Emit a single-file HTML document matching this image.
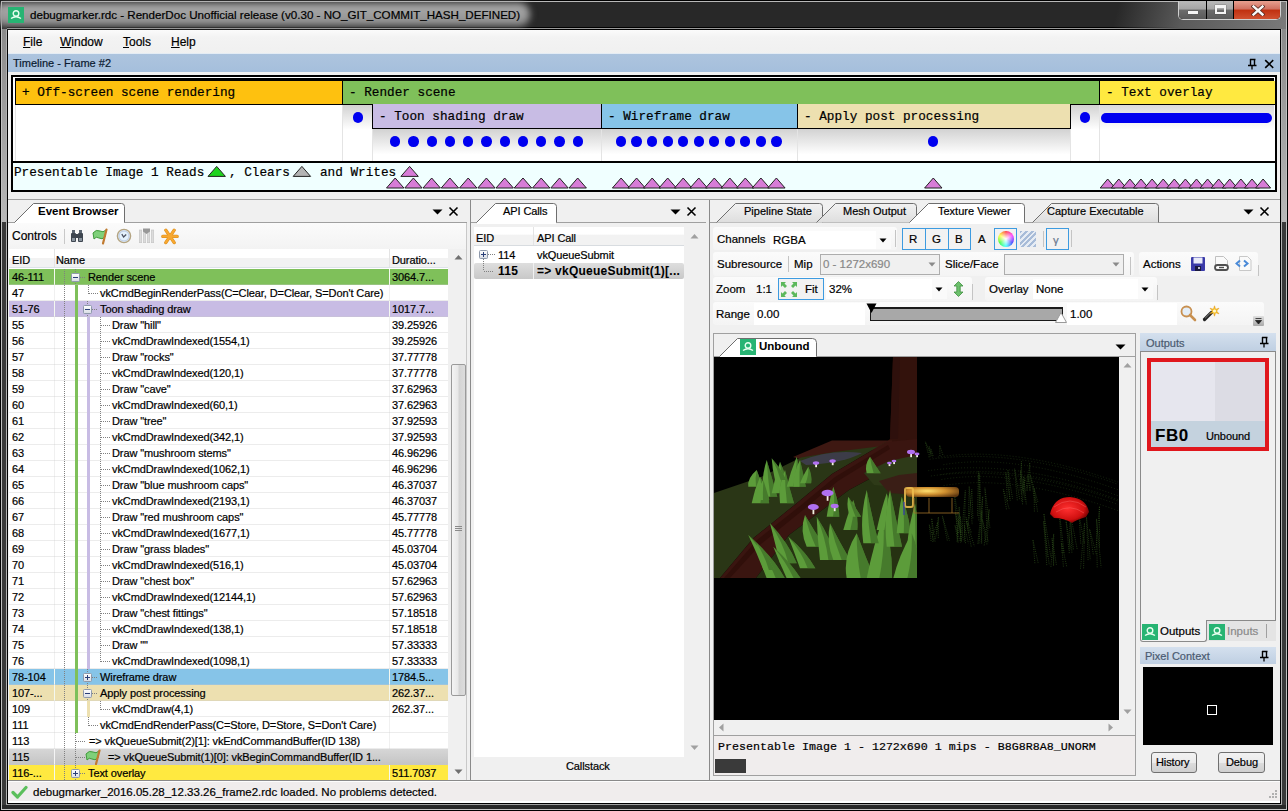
<!DOCTYPE html>
<html><head><meta charset="utf-8">
<style>
*{margin:0;padding:0;box-sizing:border-box}
html,body{width:1288px;height:811px;overflow:hidden;background:#282828;font-family:"Liberation Sans",sans-serif;font-size:11px;color:#000}
.a{position:absolute}
.t{position:absolute;white-space:pre;line-height:1;-webkit-text-stroke:0.2px currentColor}
.mono{font-family:"Liberation Mono",monospace}
.t[style*="bold"]{-webkit-text-stroke:0.05px currentColor}
</style></head><body>
<!-- window frame -->
<div class="a" style="left:0;top:0;width:1288px;height:811px;background:#282828"></div>
<div class="a" style="left:0;top:0;width:1288px;height:1px;background:#000"></div>
<div class="a" style="left:1px;top:1px;width:1286px;height:1px;background:#b8b8b8"></div>
<div class="a" style="left:0;top:0;width:1px;height:811px;background:#000"></div>
<div class="a" style="left:1px;top:1px;width:1px;height:809px;background:#c0c0c0"></div>
<div class="a" style="left:2px;top:29px;width:4px;height:193px;background:linear-gradient(#8a8a8a,#b8b8b8)"></div>
<div class="a" style="left:2px;top:222px;width:4px;height:583px;background:#3a3a3a"></div>
<div class="a" style="left:6px;top:29px;width:1px;height:776px;background:#b0b0b0"></div>
<div class="a" style="left:7px;top:29px;width:1px;height:775px;background:#000"></div>
<div class="a" style="left:1287px;top:0;width:1px;height:811px;background:#000"></div>
<div class="a" style="left:1286px;top:1px;width:1px;height:809px;background:#c0c0c0"></div>
<div class="a" style="left:1282px;top:29px;width:4px;height:193px;background:linear-gradient(#8a8a8a,#b8b8b8)"></div>
<div class="a" style="left:1282px;top:222px;width:4px;height:583px;background:#3a3a3a"></div>
<div class="a" style="left:1281px;top:29px;width:1px;height:776px;background:#b0b0b0"></div>
<div class="a" style="left:1280px;top:29px;width:1px;height:775px;background:#000"></div>
<div class="a" style="left:0;top:810px;width:1288px;height:1px;background:#000"></div>
<div class="a" style="left:1px;top:809px;width:1286px;height:1px;background:#c8c8c8"></div>
<div class="a" style="left:7px;top:803px;width:1274px;height:1px;background:#000"></div>
<div class="a" style="left:6px;top:804px;width:1276px;height:1px;background:#a0a0a0"></div>
<!-- title -->
<div class="a" style="left:7px;top:27px;width:1274px;height:1px;background:#000"></div>
<div class="a" style="left:7px;top:28px;width:1274px;height:1px;background:#9a9a9a"></div>
<div class="a" style="left:7px;top:29px;width:1274px;height:1px;background:#000"></div>
<div class="a" style="left:-6px;top:3px;width:536px;height:23px;border-radius:11px;background:linear-gradient(#acacac,#8e8e8e);filter:blur(3.5px)"></div>
<div class="a" style="left:8px;top:7px;width:16px;height:16px;background:#27b473"></div>
<svg class="a" style="left:8px;top:7px" width="16" height="16"><circle cx="8" cy="6.5" r="2.8" fill="none" stroke="#e8fff0" stroke-width="1.4"/><path d="M3 11.5 Q8 8 13 11.5" fill="none" stroke="#e8fff0" stroke-width="1.4"/></svg>
<div class="t" style="left:30px;top:9px;font-size:11.6px;color:#000">debugmarker.rdc - RenderDoc Unofficial release (v0.30 - NO_GIT_COMMIT_HASH_DEFINED)</div>
<div class="a" style="left:1100px;top:2px;width:186px;height:27px;background:linear-gradient(105deg,rgba(40,40,40,0) 10%,#5a5a5a 45%,#7a7a7a 100%)"></div>
<!-- caption buttons -->
<div class="a" style="left:1178px;top:1px;width:103px;height:19px;border:1px solid #d0d0d0;border-top:none;border-radius:0 0 5px 5px;background:#000"></div>
<div class="a" style="left:1179px;top:1px;width:27px;height:18px;background:linear-gradient(#b9b9b9,#a5a5a5 45%,#6c6c6c 50%,#5a5a5a);border-radius:0 0 0 4px"></div>
<div class="a" style="left:1207px;top:1px;width:26px;height:18px;background:linear-gradient(#b9b9b9,#a5a5a5 45%,#6c6c6c 50%,#5a5a5a)"></div>
<div class="a" style="left:1234px;top:1px;width:46px;height:18px;background:linear-gradient(#e8a090,#d07060 45%,#c03010 50%,#d05030);border-radius:0 0 4px 0"></div>
<div class="a" style="left:1188px;top:11px;width:10px;height:3px;background:#f4f4f4;box-shadow:0 0 1px #333"></div>
<div class="a" style="left:1215px;top:5px;width:11px;height:9px;border:2px solid #f4f4f4;border-top-width:3px;box-shadow:0 0 1px #333"></div>
<svg class="a" style="left:1251px;top:5px" width="14" height="11"><path d="M2.5 1.5L11.5 9.5M11.5 1.5L2.5 9.5" stroke="#5a2a20" stroke-width="4" stroke-linecap="square"/><path d="M2.5 1.5L11.5 9.5M11.5 1.5L2.5 9.5" stroke="#f8f8f8" stroke-width="2.4" stroke-linecap="square"/></svg>
<!-- client area -->
<div class="a" id="client" style="left:8px;top:30px;width:1272px;height:773px;background:#f0f0f0"></div>

<!-- menu -->
<div class="a" style="left:8px;top:30px;width:1272px;height:24px;background:linear-gradient(#fbfbfb,#f3f3f3 30%,#f0f0f0)"></div>
<div class="a" style="left:8px;top:53px;width:1272px;height:1px;background:#e4ecf4"></div>
<div class="t" style="left:23px;top:36px;font-size:12px"><u>F</u>ile</div>
<div class="t" style="left:60px;top:36px;font-size:12px"><u>W</u>indow</div>
<div class="t" style="left:123px;top:36px;font-size:12px"><u>T</u>ools</div>
<div class="t" style="left:171px;top:36px;font-size:12px"><u>H</u>elp</div>
<!-- timeline title -->
<div class="a" style="left:8px;top:54px;width:1272px;height:18px;background:linear-gradient(#adc4de,#a5bfdc)"></div>
<div class="t" style="left:13px;top:58px;font-size:11px;color:#0a1a30">Timeline - Frame #2</div>
<svg class="a" style="left:1247px;top:58px" width="12" height="12"><path d="M3 1.5h5.5M3.5 1v6M7.5 1v6" stroke="#000" stroke-width="1.4" fill="none"/><path d="M1 7.5h8.5M5 7.5v4" stroke="#000" stroke-width="1.3" fill="none"/></svg>
<svg class="a" style="left:1263px;top:58px" width="12" height="12"><path d="M2.2 2.2L10.2 9.8M10.2 2.2L2.2 9.8" stroke="#000" stroke-width="1.6"/></svg>
<!-- timeline -->
<div class="a" style="left:8px;top:72px;width:1272px;height:127px;background:#f0f0f0"></div>
<div class="a" style="left:11px;top:75px;width:1266px;height:117px;background:#000"></div>
<div class="a" style="left:13px;top:77px;width:1262px;height:84px;background:#fff"></div>
<div class="a" style="left:13px;top:163px;width:1262px;height:27px;background:#f0ffff"></div>
<div class="a" style="left:15px;top:78px;width:1259px;height:3px;background:#000"></div>
<div class="a" style="left:342px;top:104px;width:757px;height:57px;background:linear-gradient(#d0d0d0,#fff 45%)"></div>
<div class="a" style="left:1099px;top:104px;width:175px;height:57px;background:linear-gradient(#d8d8d8,#fff 45%)"></div>
<div class="a" style="left:372px;top:128px;width:698px;height:33px;background:linear-gradient(#d0d0d0,#fff 80%)"></div>
<div class="a" style="left:15px;top:104px;width:1px;height:57px;background:#e4e4e4"></div>
<div class="a" style="left:342px;top:104px;width:1px;height:57px;background:#e4e4e4"></div>
<div class="a" style="left:372px;top:104px;width:1px;height:57px;background:#e4e4e4"></div>
<div class="a" style="left:601px;top:104px;width:1px;height:57px;background:#e4e4e4"></div>
<div class="a" style="left:797px;top:104px;width:1px;height:57px;background:#e4e4e4"></div>
<div class="a" style="left:1070px;top:104px;width:1px;height:57px;background:#e4e4e4"></div>
<div class="a" style="left:1099px;top:104px;width:1px;height:57px;background:#e4e4e4"></div>
<div class="a" style="left:15px;top:81px;width:328px;height:24px;background:#fec10f;border-left:1px solid #000;border-bottom:1px solid #000;"></div>
<div class="t mono" style="left:22px;top:87px;font-size:12.7px;color:#000">+ Off-screen scene rendering</div>
<div class="a" style="left:342px;top:81px;width:758px;height:24px;background:#7fc05a;border-left:1px solid #000;border-bottom:1px solid #000;"></div>
<div class="t mono" style="left:349px;top:87px;font-size:12.7px;color:#000">- Render scene</div>
<div class="a" style="left:1099px;top:81px;width:176px;height:24px;background:#ffe940;border-left:1px solid #000;border-bottom:1px solid #000;"></div>
<div class="t mono" style="left:1106px;top:87px;font-size:12.7px;color:#000">- Text overlay</div>
<div class="a" style="left:372px;top:104px;width:230px;height:25px;background:#c8bce4;border-left:1px solid #000;border-bottom:1px solid #000;"></div>
<div class="t mono" style="left:379px;top:111px;font-size:12.7px;color:#000">- Toon shading draw</div>
<div class="a" style="left:601px;top:104px;width:197px;height:25px;background:#86c4e8;border-left:1px solid #000;border-bottom:1px solid #000;"></div>
<div class="t mono" style="left:608px;top:111px;font-size:12.7px;color:#000">- Wireframe draw</div>
<div class="a" style="left:797px;top:104px;width:274px;height:25px;background:#ede0b0;border-left:1px solid #000;border-bottom:1px solid #000;border-right:1px solid #000;"></div>
<div class="t mono" style="left:804px;top:111px;font-size:12.7px;color:#000">- Apply post processing</div>
<div class="a" style="left:352.5px;top:112.4px;width:10.4px;height:10.4px;border-radius:50%;background:#0000f0"></div>
<div class="a" style="left:1079.8px;top:112.3px;width:10.4px;height:10.4px;border-radius:50%;background:#0000f0"></div>
<div class="a" style="left:1101px;top:112.5px;width:171px;height:10px;border-radius:5px;background:#0000f0"></div>
<div class="a" style="left:390.0px;top:136.4px;width:10.4px;height:10.4px;border-radius:50%;background:#0000f0"></div>
<div class="a" style="left:408.2px;top:136.4px;width:10.4px;height:10.4px;border-radius:50%;background:#0000f0"></div>
<div class="a" style="left:426.5px;top:136.4px;width:10.4px;height:10.4px;border-radius:50%;background:#0000f0"></div>
<div class="a" style="left:444.8px;top:136.4px;width:10.4px;height:10.4px;border-radius:50%;background:#0000f0"></div>
<div class="a" style="left:463.0px;top:136.4px;width:10.4px;height:10.4px;border-radius:50%;background:#0000f0"></div>
<div class="a" style="left:481.2px;top:136.4px;width:10.4px;height:10.4px;border-radius:50%;background:#0000f0"></div>
<div class="a" style="left:499.5px;top:136.4px;width:10.4px;height:10.4px;border-radius:50%;background:#0000f0"></div>
<div class="a" style="left:517.8px;top:136.4px;width:10.4px;height:10.4px;border-radius:50%;background:#0000f0"></div>
<div class="a" style="left:536.0px;top:136.4px;width:10.4px;height:10.4px;border-radius:50%;background:#0000f0"></div>
<div class="a" style="left:554.2px;top:136.4px;width:10.4px;height:10.4px;border-radius:50%;background:#0000f0"></div>
<div class="a" style="left:572.5px;top:136.4px;width:10.4px;height:10.4px;border-radius:50%;background:#0000f0"></div>
<div class="a" style="left:615.9px;top:136.4px;width:10.4px;height:10.4px;border-radius:50%;background:#0000f0"></div>
<div class="a" style="left:631.4px;top:136.4px;width:10.4px;height:10.4px;border-radius:50%;background:#0000f0"></div>
<div class="a" style="left:647.0px;top:136.4px;width:10.4px;height:10.4px;border-radius:50%;background:#0000f0"></div>
<div class="a" style="left:662.5px;top:136.4px;width:10.4px;height:10.4px;border-radius:50%;background:#0000f0"></div>
<div class="a" style="left:678.0px;top:136.4px;width:10.4px;height:10.4px;border-radius:50%;background:#0000f0"></div>
<div class="a" style="left:693.5px;top:136.4px;width:10.4px;height:10.4px;border-radius:50%;background:#0000f0"></div>
<div class="a" style="left:709.1px;top:136.4px;width:10.4px;height:10.4px;border-radius:50%;background:#0000f0"></div>
<div class="a" style="left:724.6px;top:136.4px;width:10.4px;height:10.4px;border-radius:50%;background:#0000f0"></div>
<div class="a" style="left:740.1px;top:136.4px;width:10.4px;height:10.4px;border-radius:50%;background:#0000f0"></div>
<div class="a" style="left:755.7px;top:136.4px;width:10.4px;height:10.4px;border-radius:50%;background:#0000f0"></div>
<div class="a" style="left:771.2px;top:136.4px;width:10.4px;height:10.4px;border-radius:50%;background:#0000f0"></div>
<div class="a" style="left:928.1px;top:136.4px;width:10.4px;height:10.4px;border-radius:50%;background:#0000f0"></div>
<div class="t mono" style="left:14px;top:167px;font-size:12.7px;color:#000">Presentable Image 1 Reads</div><div class="t mono" style="left:229px;top:167px;font-size:12.7px;color:#000">, Clears</div><div class="t mono" style="left:320px;top:167px;font-size:12.7px;color:#000">and Writes</div>
<svg class="a" style="left:0;top:0" width="1288" height="200"><polygon points="208.0,176.4 216.7,166.4 225.4,176.4" fill="#1ed41e" stroke="#222" stroke-width="1"/><polygon points="293.2,176.4 301.9,166.4 310.6,176.4" fill="#b4b4b4" stroke="#222" stroke-width="1"/><polygon points="400.9,176.4 409.6,166.4 418.3,176.4" fill="#d77cd7" stroke="#222" stroke-width="1"/><polygon points="386.5,188 395.2,178 403.9,188" fill="#d77cd7" stroke="#222" stroke-width="1"/><polygon points="404.8,188 413.4,178 422.1,188" fill="#d77cd7" stroke="#222" stroke-width="1"/><polygon points="423.0,188 431.7,178 440.4,188" fill="#d77cd7" stroke="#222" stroke-width="1"/><polygon points="441.2,188 449.9,178 458.6,188" fill="#d77cd7" stroke="#222" stroke-width="1"/><polygon points="459.5,188 468.2,178 476.9,188" fill="#d77cd7" stroke="#222" stroke-width="1"/><polygon points="477.8,188 486.4,178 495.1,188" fill="#d77cd7" stroke="#222" stroke-width="1"/><polygon points="496.0,188 504.7,178 513.4,188" fill="#d77cd7" stroke="#222" stroke-width="1"/><polygon points="514.2,188 523.0,178 531.7,188" fill="#d77cd7" stroke="#222" stroke-width="1"/><polygon points="532.5,188 541.2,178 549.9,188" fill="#d77cd7" stroke="#222" stroke-width="1"/><polygon points="550.8,188 559.5,178 568.2,188" fill="#d77cd7" stroke="#222" stroke-width="1"/><polygon points="569.0,188 577.7,178 586.4,188" fill="#d77cd7" stroke="#222" stroke-width="1"/><polygon points="612.4,188 621.1,178 629.8,188" fill="#d77cd7" stroke="#222" stroke-width="1"/><polygon points="627.9,188 636.6,178 645.3,188" fill="#d77cd7" stroke="#222" stroke-width="1"/><polygon points="643.5,188 652.2,178 660.9,188" fill="#d77cd7" stroke="#222" stroke-width="1"/><polygon points="659.0,188 667.7,178 676.4,188" fill="#d77cd7" stroke="#222" stroke-width="1"/><polygon points="674.5,188 683.2,178 691.9,188" fill="#d77cd7" stroke="#222" stroke-width="1"/><polygon points="690.0,188 698.8,178 707.5,188" fill="#d77cd7" stroke="#222" stroke-width="1"/><polygon points="705.6,188 714.3,178 723.0,188" fill="#d77cd7" stroke="#222" stroke-width="1"/><polygon points="721.1,188 729.8,178 738.5,188" fill="#d77cd7" stroke="#222" stroke-width="1"/><polygon points="736.6,188 745.3,178 754.0,188" fill="#d77cd7" stroke="#222" stroke-width="1"/><polygon points="752.2,188 760.9,178 769.6,188" fill="#d77cd7" stroke="#222" stroke-width="1"/><polygon points="767.7,188 776.4,178 785.1,188" fill="#d77cd7" stroke="#222" stroke-width="1"/><polygon points="924.6,188 933.3,178 942.0,188" fill="#d77cd7" stroke="#222" stroke-width="1"/><polygon points="1100.2,188 1107.7,179 1115.2,188" fill="#d77cd7" stroke="#222" stroke-width="1"/><polygon points="1111.3,188 1118.8,179 1126.3,188" fill="#d77cd7" stroke="#222" stroke-width="1"/><polygon points="1122.4,188 1129.9,179 1137.4,188" fill="#d77cd7" stroke="#222" stroke-width="1"/><polygon points="1133.5,188 1141.0,179 1148.5,188" fill="#d77cd7" stroke="#222" stroke-width="1"/><polygon points="1144.6,188 1152.1,179 1159.6,188" fill="#d77cd7" stroke="#222" stroke-width="1"/><polygon points="1155.7,188 1163.2,179 1170.7,188" fill="#d77cd7" stroke="#222" stroke-width="1"/><polygon points="1166.8,188 1174.3,179 1181.8,188" fill="#d77cd7" stroke="#222" stroke-width="1"/><polygon points="1177.9,188 1185.4,179 1192.9,188" fill="#d77cd7" stroke="#222" stroke-width="1"/><polygon points="1189.0,188 1196.5,179 1204.0,188" fill="#d77cd7" stroke="#222" stroke-width="1"/><polygon points="1200.1,188 1207.6,179 1215.1,188" fill="#d77cd7" stroke="#222" stroke-width="1"/><polygon points="1211.2,188 1218.7,179 1226.2,188" fill="#d77cd7" stroke="#222" stroke-width="1"/><polygon points="1222.3,188 1229.8,179 1237.3,188" fill="#d77cd7" stroke="#222" stroke-width="1"/><polygon points="1233.4,188 1240.9,179 1248.4,188" fill="#d77cd7" stroke="#222" stroke-width="1"/><polygon points="1244.5,188 1252.0,179 1259.5,188" fill="#d77cd7" stroke="#222" stroke-width="1"/><polygon points="1255.6,188 1263.1,179 1270.6,188" fill="#d77cd7" stroke="#222" stroke-width="1"/></svg>
<!-- EB START -->
<div class="a" style="left:8px;top:199px;width:462px;height:1px;background:#a0a0a0"></div>
<div class="a" style="left:8px;top:222px;width:459px;height:1px;background:#a0a0a0"></div>
<svg class="a" style="left:8px;top:199px" width="130" height="25"><path d="M6.5 23.5 L25.5 4.5 H113.5 Q116.5 4.5 116.5 7.5 V23.5" fill="#fff" stroke="#6e6e6e" stroke-width="1"/><rect x="7" y="23" width="109" height="2" fill="#fff"/></svg>
<div class="t" style="left:38px;top:206px;font-size:11.5px;font-weight:bold">Event Browser</div>
<svg class="a" style="left:432px;top:208px" width="12" height="8"><path d="M0.5 1.5H10.5L5.5 6.5Z" fill="#000"/></svg>
<svg class="a" style="left:448px;top:206px" width="12" height="12"><path d="M1.5 1.5L9.5 9.5M9.5 1.5L1.5 9.5" stroke="#000" stroke-width="1.6"/></svg>
<div class="a" style="left:9px;top:223px;width:458px;height:26px;background:linear-gradient(#fbfbfb,#f3f3f3)"></div>
<div class="t" style="left:12px;top:230px;font-size:12px">Controls</div>
<div class="a" style="left:64px;top:229px;width:1px;height:15px;background:#c8c8c8"></div>
<svg class="a" style="left:70px;top:229px" width="16" height="14">
<rect x="2" y="1" width="3" height="4" fill="#5a6470"/><rect x="9" y="1" width="3" height="4" fill="#5a6470"/>
<rect x="1" y="4" width="5" height="9" rx="1" fill="#3e4650"/><rect x="8" y="4" width="5" height="9" rx="1" fill="#3e4650"/>
<rect x="5" y="5" width="4" height="4" fill="#3e4650"/><rect x="2" y="9" width="3" height="3" fill="#8a949e"/><rect x="9" y="9" width="3" height="3" fill="#8a949e"/></svg>
<svg class="a" style="left:92px;top:228px" width="17" height="17">
<path d="M1 5 Q4 1 8 3 Q11 5 14 2 L13 9 Q10 12 7 10 Q4 8 2 11 Z" fill="#7fd07a" stroke="#3f9a3a" stroke-width="1"/>
<path d="M14.5 1.5 L11 15.5" stroke="#c07a30" stroke-width="2.2" stroke-linecap="round"/></svg>
<svg class="a" style="left:116px;top:228px" width="16" height="16">
<circle cx="8" cy="8" r="6.6" fill="#e4f2fc" stroke="#b4a482" stroke-width="1.4"/><circle cx="8" cy="8" r="5" fill="none" stroke="#a8b8d8" stroke-width="0.7"/><path d="M5.8 6.2 L7.6 9 L10.2 6.6" stroke="#4a5060" stroke-width="1.3" fill="none"/></svg>
<svg class="a" style="left:138px;top:228px" width="17" height="16">
<g fill="#dcdcdc" stroke="#c4c4c4" stroke-width="0.6"><rect x="1.3" y="2" width="2.4" height="12.7"/><rect x="5.3" y="2" width="2.4" height="12.7"/><rect x="9.3" y="2" width="2.4" height="12.7"/><rect x="13.3" y="2" width="2.4" height="12.7"/></g>
<path d="M5 0.5H12V3.5L8.5 6L5 3.5Z" fill="#989898"/></svg>
<svg class="a" style="left:161px;top:228px" width="18" height="17">
<g stroke="#d88a18" stroke-width="3.2" stroke-linecap="round"><path d="M1.8 8.4H16.2M4.8 2.2L13.2 14.6M13.2 2.2L4.8 14.6"/></g>
<g stroke="#f8a830" stroke-width="2.2" stroke-linecap="round"><path d="M1.8 8.4H16.2M4.8 2.2L13.2 14.6M13.2 2.2L4.8 14.6"/></g></svg>
<div class="a" style="left:9px;top:249px;width:439px;height:532px;background:#fff"></div>
<div class="a" style="left:9px;top:249px;width:439px;height:19px;background:linear-gradient(#ffffff 0%,#ffffff 45%,#f2f2f2 50%,#f2f2f2 100%)"></div>
<div class="a" style="left:9px;top:267px;width:439px;height:1px;background:#dde2e8"></div>
<div class="a" style="left:54px;top:249px;width:1px;height:18px;background:#e4e4e4"></div>
<div class="a" style="left:389px;top:249px;width:1px;height:18px;background:#e4e4e4"></div>
<div class="t" style="left:12px;top:255px;font-size:11px;letter-spacing:-0.1px">EID</div>
<div class="t" style="left:56px;top:255px;font-size:11px;letter-spacing:-0.1px">Name</div>
<div class="t" style="left:392px;top:255px;font-size:11px;letter-spacing:-0.1px">Duratio...</div>
<div class="a" style="left:9px;top:269px;width:439px;height:16px;background:#7fc05a"></div>
<div class="a" style="left:54px;top:269px;width:1px;height:16px;background:#f4f8f0"></div>
<div class="a" style="left:389px;top:269px;width:1px;height:16px;background:#f4f8f0"></div>
<div class="a" style="left:9px;top:284px;width:439px;height:1px;background:rgba(200,200,200,0.35)"></div>
<div class="t" style="left:12px;top:272px;font-size:11px;letter-spacing:-0.1px">46-111</div>
<div class="a" style="left:64px;top:269px;width:1px;height:16px;background:repeating-linear-gradient(#808080 0 1px,transparent 1px 2px)"></div>
<div class="a" style="left:75px;top:269px;width:1px;height:16px;background:repeating-linear-gradient(#808080 0 1px,transparent 1px 2px)"></div>
<svg class="a" style="left:71px;top:273px" width="9" height="9"><defs><linearGradient id="bg71273" x1="0" y1="0" x2="0" y2="1"><stop offset="0" stop-color="#fff"/><stop offset="1" stop-color="#d8dce4"/></linearGradient></defs><rect x="0.5" y="0.5" width="8" height="8" rx="1" fill="url(#bg71273)" stroke="#8e99ab"/><path d="M2 4.5H7" stroke="#2a3f78" stroke-width="1"/></svg>
<div class="a" style="left:80px;top:277px;width:6px;height:1px;background:repeating-linear-gradient(90deg,#808080 0 1px,transparent 1px 2px)"></div>
<div class="t" style="left:88px;top:272px;font-size:11px;letter-spacing:-0.1px">Render scene</div>
<div class="t" style="left:392px;top:272px;font-size:11px;letter-spacing:-0.1px">3064.7...</div>
<div class="a" style="left:54px;top:285px;width:1px;height:16px;background:#f0f0f0"></div>
<div class="a" style="left:389px;top:285px;width:1px;height:16px;background:#f0f0f0"></div>
<div class="a" style="left:9px;top:300px;width:439px;height:1px;background:rgba(200,200,200,0.35)"></div>
<div class="t" style="left:12px;top:288px;font-size:11px;letter-spacing:-0.1px">47</div>
<div class="a" style="left:64px;top:285px;width:1px;height:16px;background:repeating-linear-gradient(#808080 0 1px,transparent 1px 2px)"></div>
<div class="a" style="left:75px;top:285px;width:3px;height:16px;background:#7fc05a"></div>
<div class="a" style="left:88px;top:285px;width:1px;height:9px;background:repeating-linear-gradient(#808080 0 1px,transparent 1px 2px)"></div>
<div class="a" style="left:89px;top:293px;width:9px;height:1px;background:repeating-linear-gradient(90deg,#808080 0 1px,transparent 1px 2px)"></div>
<div class="t" style="left:100px;top:288px;font-size:11px;letter-spacing:-0.1px">vkCmdBeginRenderPass(C=Clear, D=Clear, S=Don't Care)</div>
<div class="a" style="left:9px;top:301px;width:439px;height:16px;background:#c8bce4"></div>
<div class="a" style="left:54px;top:301px;width:1px;height:16px;background:#f4f8f0"></div>
<div class="a" style="left:389px;top:301px;width:1px;height:16px;background:#f4f8f0"></div>
<div class="a" style="left:9px;top:316px;width:439px;height:1px;background:rgba(200,200,200,0.35)"></div>
<div class="t" style="left:12px;top:304px;font-size:11px;letter-spacing:-0.1px">51-76</div>
<div class="a" style="left:64px;top:301px;width:1px;height:16px;background:repeating-linear-gradient(#808080 0 1px,transparent 1px 2px)"></div>
<div class="a" style="left:75px;top:301px;width:3px;height:16px;background:#7fc05a"></div>
<div class="a" style="left:87px;top:301px;width:1px;height:16px;background:repeating-linear-gradient(#808080 0 1px,transparent 1px 2px)"></div>
<svg class="a" style="left:83px;top:305px" width="9" height="9"><defs><linearGradient id="bg83305" x1="0" y1="0" x2="0" y2="1"><stop offset="0" stop-color="#fff"/><stop offset="1" stop-color="#d8dce4"/></linearGradient></defs><rect x="0.5" y="0.5" width="8" height="8" rx="1" fill="url(#bg83305)" stroke="#8e99ab"/><path d="M2 4.5H7" stroke="#2a3f78" stroke-width="1"/></svg>
<div class="a" style="left:92px;top:309px;width:6px;height:1px;background:repeating-linear-gradient(90deg,#808080 0 1px,transparent 1px 2px)"></div>
<div class="t" style="left:100px;top:304px;font-size:11px;letter-spacing:-0.1px">Toon shading draw</div>
<div class="t" style="left:392px;top:304px;font-size:11px;letter-spacing:-0.1px">1017.7...</div>
<div class="a" style="left:54px;top:317px;width:1px;height:16px;background:#f0f0f0"></div>
<div class="a" style="left:389px;top:317px;width:1px;height:16px;background:#f0f0f0"></div>
<div class="a" style="left:9px;top:332px;width:439px;height:1px;background:rgba(200,200,200,0.35)"></div>
<div class="t" style="left:12px;top:320px;font-size:11px;letter-spacing:-0.1px">55</div>
<div class="a" style="left:64px;top:317px;width:1px;height:16px;background:repeating-linear-gradient(#808080 0 1px,transparent 1px 2px)"></div>
<div class="a" style="left:75px;top:317px;width:3px;height:16px;background:#7fc05a"></div>
<div class="a" style="left:87px;top:317px;width:3px;height:16px;background:#c8bce4"></div>
<div class="a" style="left:100px;top:317px;width:1px;height:16px;background:repeating-linear-gradient(#808080 0 1px,transparent 1px 2px)"></div>
<div class="a" style="left:101px;top:325px;width:9px;height:1px;background:repeating-linear-gradient(90deg,#808080 0 1px,transparent 1px 2px)"></div>
<div class="t" style="left:112px;top:320px;font-size:11px;letter-spacing:-0.1px">Draw &quot;hill&quot;</div>
<div class="t" style="left:392px;top:320px;font-size:11px;letter-spacing:-0.1px">39.25926</div>
<div class="a" style="left:54px;top:333px;width:1px;height:16px;background:#f0f0f0"></div>
<div class="a" style="left:389px;top:333px;width:1px;height:16px;background:#f0f0f0"></div>
<div class="a" style="left:9px;top:348px;width:439px;height:1px;background:rgba(200,200,200,0.35)"></div>
<div class="t" style="left:12px;top:336px;font-size:11px;letter-spacing:-0.1px">56</div>
<div class="a" style="left:64px;top:333px;width:1px;height:16px;background:repeating-linear-gradient(#808080 0 1px,transparent 1px 2px)"></div>
<div class="a" style="left:75px;top:333px;width:3px;height:16px;background:#7fc05a"></div>
<div class="a" style="left:87px;top:333px;width:3px;height:16px;background:#c8bce4"></div>
<div class="a" style="left:100px;top:333px;width:1px;height:16px;background:repeating-linear-gradient(#808080 0 1px,transparent 1px 2px)"></div>
<div class="a" style="left:101px;top:341px;width:9px;height:1px;background:repeating-linear-gradient(90deg,#808080 0 1px,transparent 1px 2px)"></div>
<div class="t" style="left:112px;top:336px;font-size:11px;letter-spacing:-0.1px">vkCmdDrawIndexed(1554,1)</div>
<div class="t" style="left:392px;top:336px;font-size:11px;letter-spacing:-0.1px">39.25926</div>
<div class="a" style="left:54px;top:349px;width:1px;height:16px;background:#f0f0f0"></div>
<div class="a" style="left:389px;top:349px;width:1px;height:16px;background:#f0f0f0"></div>
<div class="a" style="left:9px;top:364px;width:439px;height:1px;background:rgba(200,200,200,0.35)"></div>
<div class="t" style="left:12px;top:352px;font-size:11px;letter-spacing:-0.1px">57</div>
<div class="a" style="left:64px;top:349px;width:1px;height:16px;background:repeating-linear-gradient(#808080 0 1px,transparent 1px 2px)"></div>
<div class="a" style="left:75px;top:349px;width:3px;height:16px;background:#7fc05a"></div>
<div class="a" style="left:87px;top:349px;width:3px;height:16px;background:#c8bce4"></div>
<div class="a" style="left:100px;top:349px;width:1px;height:16px;background:repeating-linear-gradient(#808080 0 1px,transparent 1px 2px)"></div>
<div class="a" style="left:101px;top:357px;width:9px;height:1px;background:repeating-linear-gradient(90deg,#808080 0 1px,transparent 1px 2px)"></div>
<div class="t" style="left:112px;top:352px;font-size:11px;letter-spacing:-0.1px">Draw &quot;rocks&quot;</div>
<div class="t" style="left:392px;top:352px;font-size:11px;letter-spacing:-0.1px">37.77778</div>
<div class="a" style="left:54px;top:365px;width:1px;height:16px;background:#f0f0f0"></div>
<div class="a" style="left:389px;top:365px;width:1px;height:16px;background:#f0f0f0"></div>
<div class="a" style="left:9px;top:380px;width:439px;height:1px;background:rgba(200,200,200,0.35)"></div>
<div class="t" style="left:12px;top:368px;font-size:11px;letter-spacing:-0.1px">58</div>
<div class="a" style="left:64px;top:365px;width:1px;height:16px;background:repeating-linear-gradient(#808080 0 1px,transparent 1px 2px)"></div>
<div class="a" style="left:75px;top:365px;width:3px;height:16px;background:#7fc05a"></div>
<div class="a" style="left:87px;top:365px;width:3px;height:16px;background:#c8bce4"></div>
<div class="a" style="left:100px;top:365px;width:1px;height:16px;background:repeating-linear-gradient(#808080 0 1px,transparent 1px 2px)"></div>
<div class="a" style="left:101px;top:373px;width:9px;height:1px;background:repeating-linear-gradient(90deg,#808080 0 1px,transparent 1px 2px)"></div>
<div class="t" style="left:112px;top:368px;font-size:11px;letter-spacing:-0.1px">vkCmdDrawIndexed(120,1)</div>
<div class="t" style="left:392px;top:368px;font-size:11px;letter-spacing:-0.1px">37.77778</div>
<div class="a" style="left:54px;top:381px;width:1px;height:16px;background:#f0f0f0"></div>
<div class="a" style="left:389px;top:381px;width:1px;height:16px;background:#f0f0f0"></div>
<div class="a" style="left:9px;top:396px;width:439px;height:1px;background:rgba(200,200,200,0.35)"></div>
<div class="t" style="left:12px;top:384px;font-size:11px;letter-spacing:-0.1px">59</div>
<div class="a" style="left:64px;top:381px;width:1px;height:16px;background:repeating-linear-gradient(#808080 0 1px,transparent 1px 2px)"></div>
<div class="a" style="left:75px;top:381px;width:3px;height:16px;background:#7fc05a"></div>
<div class="a" style="left:87px;top:381px;width:3px;height:16px;background:#c8bce4"></div>
<div class="a" style="left:100px;top:381px;width:1px;height:16px;background:repeating-linear-gradient(#808080 0 1px,transparent 1px 2px)"></div>
<div class="a" style="left:101px;top:389px;width:9px;height:1px;background:repeating-linear-gradient(90deg,#808080 0 1px,transparent 1px 2px)"></div>
<div class="t" style="left:112px;top:384px;font-size:11px;letter-spacing:-0.1px">Draw &quot;cave&quot;</div>
<div class="t" style="left:392px;top:384px;font-size:11px;letter-spacing:-0.1px">37.62963</div>
<div class="a" style="left:54px;top:397px;width:1px;height:16px;background:#f0f0f0"></div>
<div class="a" style="left:389px;top:397px;width:1px;height:16px;background:#f0f0f0"></div>
<div class="a" style="left:9px;top:412px;width:439px;height:1px;background:rgba(200,200,200,0.35)"></div>
<div class="t" style="left:12px;top:400px;font-size:11px;letter-spacing:-0.1px">60</div>
<div class="a" style="left:64px;top:397px;width:1px;height:16px;background:repeating-linear-gradient(#808080 0 1px,transparent 1px 2px)"></div>
<div class="a" style="left:75px;top:397px;width:3px;height:16px;background:#7fc05a"></div>
<div class="a" style="left:87px;top:397px;width:3px;height:16px;background:#c8bce4"></div>
<div class="a" style="left:100px;top:397px;width:1px;height:16px;background:repeating-linear-gradient(#808080 0 1px,transparent 1px 2px)"></div>
<div class="a" style="left:101px;top:405px;width:9px;height:1px;background:repeating-linear-gradient(90deg,#808080 0 1px,transparent 1px 2px)"></div>
<div class="t" style="left:112px;top:400px;font-size:11px;letter-spacing:-0.1px">vkCmdDrawIndexed(60,1)</div>
<div class="t" style="left:392px;top:400px;font-size:11px;letter-spacing:-0.1px">37.62963</div>
<div class="a" style="left:54px;top:413px;width:1px;height:16px;background:#f0f0f0"></div>
<div class="a" style="left:389px;top:413px;width:1px;height:16px;background:#f0f0f0"></div>
<div class="a" style="left:9px;top:428px;width:439px;height:1px;background:rgba(200,200,200,0.35)"></div>
<div class="t" style="left:12px;top:416px;font-size:11px;letter-spacing:-0.1px">61</div>
<div class="a" style="left:64px;top:413px;width:1px;height:16px;background:repeating-linear-gradient(#808080 0 1px,transparent 1px 2px)"></div>
<div class="a" style="left:75px;top:413px;width:3px;height:16px;background:#7fc05a"></div>
<div class="a" style="left:87px;top:413px;width:3px;height:16px;background:#c8bce4"></div>
<div class="a" style="left:100px;top:413px;width:1px;height:16px;background:repeating-linear-gradient(#808080 0 1px,transparent 1px 2px)"></div>
<div class="a" style="left:101px;top:421px;width:9px;height:1px;background:repeating-linear-gradient(90deg,#808080 0 1px,transparent 1px 2px)"></div>
<div class="t" style="left:112px;top:416px;font-size:11px;letter-spacing:-0.1px">Draw &quot;tree&quot;</div>
<div class="t" style="left:392px;top:416px;font-size:11px;letter-spacing:-0.1px">37.92593</div>
<div class="a" style="left:54px;top:429px;width:1px;height:16px;background:#f0f0f0"></div>
<div class="a" style="left:389px;top:429px;width:1px;height:16px;background:#f0f0f0"></div>
<div class="a" style="left:9px;top:444px;width:439px;height:1px;background:rgba(200,200,200,0.35)"></div>
<div class="t" style="left:12px;top:432px;font-size:11px;letter-spacing:-0.1px">62</div>
<div class="a" style="left:64px;top:429px;width:1px;height:16px;background:repeating-linear-gradient(#808080 0 1px,transparent 1px 2px)"></div>
<div class="a" style="left:75px;top:429px;width:3px;height:16px;background:#7fc05a"></div>
<div class="a" style="left:87px;top:429px;width:3px;height:16px;background:#c8bce4"></div>
<div class="a" style="left:100px;top:429px;width:1px;height:16px;background:repeating-linear-gradient(#808080 0 1px,transparent 1px 2px)"></div>
<div class="a" style="left:101px;top:437px;width:9px;height:1px;background:repeating-linear-gradient(90deg,#808080 0 1px,transparent 1px 2px)"></div>
<div class="t" style="left:112px;top:432px;font-size:11px;letter-spacing:-0.1px">vkCmdDrawIndexed(342,1)</div>
<div class="t" style="left:392px;top:432px;font-size:11px;letter-spacing:-0.1px">37.92593</div>
<div class="a" style="left:54px;top:445px;width:1px;height:16px;background:#f0f0f0"></div>
<div class="a" style="left:389px;top:445px;width:1px;height:16px;background:#f0f0f0"></div>
<div class="a" style="left:9px;top:460px;width:439px;height:1px;background:rgba(200,200,200,0.35)"></div>
<div class="t" style="left:12px;top:448px;font-size:11px;letter-spacing:-0.1px">63</div>
<div class="a" style="left:64px;top:445px;width:1px;height:16px;background:repeating-linear-gradient(#808080 0 1px,transparent 1px 2px)"></div>
<div class="a" style="left:75px;top:445px;width:3px;height:16px;background:#7fc05a"></div>
<div class="a" style="left:87px;top:445px;width:3px;height:16px;background:#c8bce4"></div>
<div class="a" style="left:100px;top:445px;width:1px;height:16px;background:repeating-linear-gradient(#808080 0 1px,transparent 1px 2px)"></div>
<div class="a" style="left:101px;top:453px;width:9px;height:1px;background:repeating-linear-gradient(90deg,#808080 0 1px,transparent 1px 2px)"></div>
<div class="t" style="left:112px;top:448px;font-size:11px;letter-spacing:-0.1px">Draw &quot;mushroom stems&quot;</div>
<div class="t" style="left:392px;top:448px;font-size:11px;letter-spacing:-0.1px">46.96296</div>
<div class="a" style="left:54px;top:461px;width:1px;height:16px;background:#f0f0f0"></div>
<div class="a" style="left:389px;top:461px;width:1px;height:16px;background:#f0f0f0"></div>
<div class="a" style="left:9px;top:476px;width:439px;height:1px;background:rgba(200,200,200,0.35)"></div>
<div class="t" style="left:12px;top:464px;font-size:11px;letter-spacing:-0.1px">64</div>
<div class="a" style="left:64px;top:461px;width:1px;height:16px;background:repeating-linear-gradient(#808080 0 1px,transparent 1px 2px)"></div>
<div class="a" style="left:75px;top:461px;width:3px;height:16px;background:#7fc05a"></div>
<div class="a" style="left:87px;top:461px;width:3px;height:16px;background:#c8bce4"></div>
<div class="a" style="left:100px;top:461px;width:1px;height:16px;background:repeating-linear-gradient(#808080 0 1px,transparent 1px 2px)"></div>
<div class="a" style="left:101px;top:469px;width:9px;height:1px;background:repeating-linear-gradient(90deg,#808080 0 1px,transparent 1px 2px)"></div>
<div class="t" style="left:112px;top:464px;font-size:11px;letter-spacing:-0.1px">vkCmdDrawIndexed(1062,1)</div>
<div class="t" style="left:392px;top:464px;font-size:11px;letter-spacing:-0.1px">46.96296</div>
<div class="a" style="left:54px;top:477px;width:1px;height:16px;background:#f0f0f0"></div>
<div class="a" style="left:389px;top:477px;width:1px;height:16px;background:#f0f0f0"></div>
<div class="a" style="left:9px;top:492px;width:439px;height:1px;background:rgba(200,200,200,0.35)"></div>
<div class="t" style="left:12px;top:480px;font-size:11px;letter-spacing:-0.1px">65</div>
<div class="a" style="left:64px;top:477px;width:1px;height:16px;background:repeating-linear-gradient(#808080 0 1px,transparent 1px 2px)"></div>
<div class="a" style="left:75px;top:477px;width:3px;height:16px;background:#7fc05a"></div>
<div class="a" style="left:87px;top:477px;width:3px;height:16px;background:#c8bce4"></div>
<div class="a" style="left:100px;top:477px;width:1px;height:16px;background:repeating-linear-gradient(#808080 0 1px,transparent 1px 2px)"></div>
<div class="a" style="left:101px;top:485px;width:9px;height:1px;background:repeating-linear-gradient(90deg,#808080 0 1px,transparent 1px 2px)"></div>
<div class="t" style="left:112px;top:480px;font-size:11px;letter-spacing:-0.1px">Draw &quot;blue mushroom caps&quot;</div>
<div class="t" style="left:392px;top:480px;font-size:11px;letter-spacing:-0.1px">46.37037</div>
<div class="a" style="left:54px;top:493px;width:1px;height:16px;background:#f0f0f0"></div>
<div class="a" style="left:389px;top:493px;width:1px;height:16px;background:#f0f0f0"></div>
<div class="a" style="left:9px;top:508px;width:439px;height:1px;background:rgba(200,200,200,0.35)"></div>
<div class="t" style="left:12px;top:496px;font-size:11px;letter-spacing:-0.1px">66</div>
<div class="a" style="left:64px;top:493px;width:1px;height:16px;background:repeating-linear-gradient(#808080 0 1px,transparent 1px 2px)"></div>
<div class="a" style="left:75px;top:493px;width:3px;height:16px;background:#7fc05a"></div>
<div class="a" style="left:87px;top:493px;width:3px;height:16px;background:#c8bce4"></div>
<div class="a" style="left:100px;top:493px;width:1px;height:16px;background:repeating-linear-gradient(#808080 0 1px,transparent 1px 2px)"></div>
<div class="a" style="left:101px;top:501px;width:9px;height:1px;background:repeating-linear-gradient(90deg,#808080 0 1px,transparent 1px 2px)"></div>
<div class="t" style="left:112px;top:496px;font-size:11px;letter-spacing:-0.1px">vkCmdDrawIndexed(2193,1)</div>
<div class="t" style="left:392px;top:496px;font-size:11px;letter-spacing:-0.1px">46.37037</div>
<div class="a" style="left:54px;top:509px;width:1px;height:16px;background:#f0f0f0"></div>
<div class="a" style="left:389px;top:509px;width:1px;height:16px;background:#f0f0f0"></div>
<div class="a" style="left:9px;top:524px;width:439px;height:1px;background:rgba(200,200,200,0.35)"></div>
<div class="t" style="left:12px;top:512px;font-size:11px;letter-spacing:-0.1px">67</div>
<div class="a" style="left:64px;top:509px;width:1px;height:16px;background:repeating-linear-gradient(#808080 0 1px,transparent 1px 2px)"></div>
<div class="a" style="left:75px;top:509px;width:3px;height:16px;background:#7fc05a"></div>
<div class="a" style="left:87px;top:509px;width:3px;height:16px;background:#c8bce4"></div>
<div class="a" style="left:100px;top:509px;width:1px;height:16px;background:repeating-linear-gradient(#808080 0 1px,transparent 1px 2px)"></div>
<div class="a" style="left:101px;top:517px;width:9px;height:1px;background:repeating-linear-gradient(90deg,#808080 0 1px,transparent 1px 2px)"></div>
<div class="t" style="left:112px;top:512px;font-size:11px;letter-spacing:-0.1px">Draw &quot;red mushroom caps&quot;</div>
<div class="t" style="left:392px;top:512px;font-size:11px;letter-spacing:-0.1px">45.77778</div>
<div class="a" style="left:54px;top:525px;width:1px;height:16px;background:#f0f0f0"></div>
<div class="a" style="left:389px;top:525px;width:1px;height:16px;background:#f0f0f0"></div>
<div class="a" style="left:9px;top:540px;width:439px;height:1px;background:rgba(200,200,200,0.35)"></div>
<div class="t" style="left:12px;top:528px;font-size:11px;letter-spacing:-0.1px">68</div>
<div class="a" style="left:64px;top:525px;width:1px;height:16px;background:repeating-linear-gradient(#808080 0 1px,transparent 1px 2px)"></div>
<div class="a" style="left:75px;top:525px;width:3px;height:16px;background:#7fc05a"></div>
<div class="a" style="left:87px;top:525px;width:3px;height:16px;background:#c8bce4"></div>
<div class="a" style="left:100px;top:525px;width:1px;height:16px;background:repeating-linear-gradient(#808080 0 1px,transparent 1px 2px)"></div>
<div class="a" style="left:101px;top:533px;width:9px;height:1px;background:repeating-linear-gradient(90deg,#808080 0 1px,transparent 1px 2px)"></div>
<div class="t" style="left:112px;top:528px;font-size:11px;letter-spacing:-0.1px">vkCmdDrawIndexed(1677,1)</div>
<div class="t" style="left:392px;top:528px;font-size:11px;letter-spacing:-0.1px">45.77778</div>
<div class="a" style="left:54px;top:541px;width:1px;height:16px;background:#f0f0f0"></div>
<div class="a" style="left:389px;top:541px;width:1px;height:16px;background:#f0f0f0"></div>
<div class="a" style="left:9px;top:556px;width:439px;height:1px;background:rgba(200,200,200,0.35)"></div>
<div class="t" style="left:12px;top:544px;font-size:11px;letter-spacing:-0.1px">69</div>
<div class="a" style="left:64px;top:541px;width:1px;height:16px;background:repeating-linear-gradient(#808080 0 1px,transparent 1px 2px)"></div>
<div class="a" style="left:75px;top:541px;width:3px;height:16px;background:#7fc05a"></div>
<div class="a" style="left:87px;top:541px;width:3px;height:16px;background:#c8bce4"></div>
<div class="a" style="left:100px;top:541px;width:1px;height:16px;background:repeating-linear-gradient(#808080 0 1px,transparent 1px 2px)"></div>
<div class="a" style="left:101px;top:549px;width:9px;height:1px;background:repeating-linear-gradient(90deg,#808080 0 1px,transparent 1px 2px)"></div>
<div class="t" style="left:112px;top:544px;font-size:11px;letter-spacing:-0.1px">Draw &quot;grass blades&quot;</div>
<div class="t" style="left:392px;top:544px;font-size:11px;letter-spacing:-0.1px">45.03704</div>
<div class="a" style="left:54px;top:557px;width:1px;height:16px;background:#f0f0f0"></div>
<div class="a" style="left:389px;top:557px;width:1px;height:16px;background:#f0f0f0"></div>
<div class="a" style="left:9px;top:572px;width:439px;height:1px;background:rgba(200,200,200,0.35)"></div>
<div class="t" style="left:12px;top:560px;font-size:11px;letter-spacing:-0.1px">70</div>
<div class="a" style="left:64px;top:557px;width:1px;height:16px;background:repeating-linear-gradient(#808080 0 1px,transparent 1px 2px)"></div>
<div class="a" style="left:75px;top:557px;width:3px;height:16px;background:#7fc05a"></div>
<div class="a" style="left:87px;top:557px;width:3px;height:16px;background:#c8bce4"></div>
<div class="a" style="left:100px;top:557px;width:1px;height:16px;background:repeating-linear-gradient(#808080 0 1px,transparent 1px 2px)"></div>
<div class="a" style="left:101px;top:565px;width:9px;height:1px;background:repeating-linear-gradient(90deg,#808080 0 1px,transparent 1px 2px)"></div>
<div class="t" style="left:112px;top:560px;font-size:11px;letter-spacing:-0.1px">vkCmdDrawIndexed(516,1)</div>
<div class="t" style="left:392px;top:560px;font-size:11px;letter-spacing:-0.1px">45.03704</div>
<div class="a" style="left:54px;top:573px;width:1px;height:16px;background:#f0f0f0"></div>
<div class="a" style="left:389px;top:573px;width:1px;height:16px;background:#f0f0f0"></div>
<div class="a" style="left:9px;top:588px;width:439px;height:1px;background:rgba(200,200,200,0.35)"></div>
<div class="t" style="left:12px;top:576px;font-size:11px;letter-spacing:-0.1px">71</div>
<div class="a" style="left:64px;top:573px;width:1px;height:16px;background:repeating-linear-gradient(#808080 0 1px,transparent 1px 2px)"></div>
<div class="a" style="left:75px;top:573px;width:3px;height:16px;background:#7fc05a"></div>
<div class="a" style="left:87px;top:573px;width:3px;height:16px;background:#c8bce4"></div>
<div class="a" style="left:100px;top:573px;width:1px;height:16px;background:repeating-linear-gradient(#808080 0 1px,transparent 1px 2px)"></div>
<div class="a" style="left:101px;top:581px;width:9px;height:1px;background:repeating-linear-gradient(90deg,#808080 0 1px,transparent 1px 2px)"></div>
<div class="t" style="left:112px;top:576px;font-size:11px;letter-spacing:-0.1px">Draw &quot;chest box&quot;</div>
<div class="t" style="left:392px;top:576px;font-size:11px;letter-spacing:-0.1px">57.62963</div>
<div class="a" style="left:54px;top:589px;width:1px;height:16px;background:#f0f0f0"></div>
<div class="a" style="left:389px;top:589px;width:1px;height:16px;background:#f0f0f0"></div>
<div class="a" style="left:9px;top:604px;width:439px;height:1px;background:rgba(200,200,200,0.35)"></div>
<div class="t" style="left:12px;top:592px;font-size:11px;letter-spacing:-0.1px">72</div>
<div class="a" style="left:64px;top:589px;width:1px;height:16px;background:repeating-linear-gradient(#808080 0 1px,transparent 1px 2px)"></div>
<div class="a" style="left:75px;top:589px;width:3px;height:16px;background:#7fc05a"></div>
<div class="a" style="left:87px;top:589px;width:3px;height:16px;background:#c8bce4"></div>
<div class="a" style="left:100px;top:589px;width:1px;height:16px;background:repeating-linear-gradient(#808080 0 1px,transparent 1px 2px)"></div>
<div class="a" style="left:101px;top:597px;width:9px;height:1px;background:repeating-linear-gradient(90deg,#808080 0 1px,transparent 1px 2px)"></div>
<div class="t" style="left:112px;top:592px;font-size:11px;letter-spacing:-0.1px">vkCmdDrawIndexed(12144,1)</div>
<div class="t" style="left:392px;top:592px;font-size:11px;letter-spacing:-0.1px">57.62963</div>
<div class="a" style="left:54px;top:605px;width:1px;height:16px;background:#f0f0f0"></div>
<div class="a" style="left:389px;top:605px;width:1px;height:16px;background:#f0f0f0"></div>
<div class="a" style="left:9px;top:620px;width:439px;height:1px;background:rgba(200,200,200,0.35)"></div>
<div class="t" style="left:12px;top:608px;font-size:11px;letter-spacing:-0.1px">73</div>
<div class="a" style="left:64px;top:605px;width:1px;height:16px;background:repeating-linear-gradient(#808080 0 1px,transparent 1px 2px)"></div>
<div class="a" style="left:75px;top:605px;width:3px;height:16px;background:#7fc05a"></div>
<div class="a" style="left:87px;top:605px;width:3px;height:16px;background:#c8bce4"></div>
<div class="a" style="left:100px;top:605px;width:1px;height:16px;background:repeating-linear-gradient(#808080 0 1px,transparent 1px 2px)"></div>
<div class="a" style="left:101px;top:613px;width:9px;height:1px;background:repeating-linear-gradient(90deg,#808080 0 1px,transparent 1px 2px)"></div>
<div class="t" style="left:112px;top:608px;font-size:11px;letter-spacing:-0.1px">Draw &quot;chest fittings&quot;</div>
<div class="t" style="left:392px;top:608px;font-size:11px;letter-spacing:-0.1px">57.18518</div>
<div class="a" style="left:54px;top:621px;width:1px;height:16px;background:#f0f0f0"></div>
<div class="a" style="left:389px;top:621px;width:1px;height:16px;background:#f0f0f0"></div>
<div class="a" style="left:9px;top:636px;width:439px;height:1px;background:rgba(200,200,200,0.35)"></div>
<div class="t" style="left:12px;top:624px;font-size:11px;letter-spacing:-0.1px">74</div>
<div class="a" style="left:64px;top:621px;width:1px;height:16px;background:repeating-linear-gradient(#808080 0 1px,transparent 1px 2px)"></div>
<div class="a" style="left:75px;top:621px;width:3px;height:16px;background:#7fc05a"></div>
<div class="a" style="left:87px;top:621px;width:3px;height:16px;background:#c8bce4"></div>
<div class="a" style="left:100px;top:621px;width:1px;height:16px;background:repeating-linear-gradient(#808080 0 1px,transparent 1px 2px)"></div>
<div class="a" style="left:101px;top:629px;width:9px;height:1px;background:repeating-linear-gradient(90deg,#808080 0 1px,transparent 1px 2px)"></div>
<div class="t" style="left:112px;top:624px;font-size:11px;letter-spacing:-0.1px">vkCmdDrawIndexed(138,1)</div>
<div class="t" style="left:392px;top:624px;font-size:11px;letter-spacing:-0.1px">57.18518</div>
<div class="a" style="left:54px;top:637px;width:1px;height:16px;background:#f0f0f0"></div>
<div class="a" style="left:389px;top:637px;width:1px;height:16px;background:#f0f0f0"></div>
<div class="a" style="left:9px;top:652px;width:439px;height:1px;background:rgba(200,200,200,0.35)"></div>
<div class="t" style="left:12px;top:640px;font-size:11px;letter-spacing:-0.1px">75</div>
<div class="a" style="left:64px;top:637px;width:1px;height:16px;background:repeating-linear-gradient(#808080 0 1px,transparent 1px 2px)"></div>
<div class="a" style="left:75px;top:637px;width:3px;height:16px;background:#7fc05a"></div>
<div class="a" style="left:87px;top:637px;width:3px;height:16px;background:#c8bce4"></div>
<div class="a" style="left:100px;top:637px;width:1px;height:16px;background:repeating-linear-gradient(#808080 0 1px,transparent 1px 2px)"></div>
<div class="a" style="left:101px;top:645px;width:9px;height:1px;background:repeating-linear-gradient(90deg,#808080 0 1px,transparent 1px 2px)"></div>
<div class="t" style="left:112px;top:640px;font-size:11px;letter-spacing:-0.1px">Draw &quot;&quot;</div>
<div class="t" style="left:392px;top:640px;font-size:11px;letter-spacing:-0.1px">57.33333</div>
<div class="a" style="left:54px;top:653px;width:1px;height:16px;background:#f0f0f0"></div>
<div class="a" style="left:389px;top:653px;width:1px;height:16px;background:#f0f0f0"></div>
<div class="a" style="left:9px;top:668px;width:439px;height:1px;background:rgba(200,200,200,0.35)"></div>
<div class="t" style="left:12px;top:656px;font-size:11px;letter-spacing:-0.1px">76</div>
<div class="a" style="left:64px;top:653px;width:1px;height:16px;background:repeating-linear-gradient(#808080 0 1px,transparent 1px 2px)"></div>
<div class="a" style="left:75px;top:653px;width:3px;height:16px;background:#7fc05a"></div>
<div class="a" style="left:87px;top:653px;width:3px;height:16px;background:#c8bce4"></div>
<div class="a" style="left:100px;top:653px;width:1px;height:9px;background:repeating-linear-gradient(#808080 0 1px,transparent 1px 2px)"></div>
<div class="a" style="left:101px;top:661px;width:9px;height:1px;background:repeating-linear-gradient(90deg,#808080 0 1px,transparent 1px 2px)"></div>
<div class="t" style="left:112px;top:656px;font-size:11px;letter-spacing:-0.1px">vkCmdDrawIndexed(1098,1)</div>
<div class="t" style="left:392px;top:656px;font-size:11px;letter-spacing:-0.1px">57.33333</div>
<div class="a" style="left:9px;top:669px;width:439px;height:16px;background:#86c4e8"></div>
<div class="a" style="left:54px;top:669px;width:1px;height:16px;background:#f4f8f0"></div>
<div class="a" style="left:389px;top:669px;width:1px;height:16px;background:#f4f8f0"></div>
<div class="a" style="left:9px;top:684px;width:439px;height:1px;background:rgba(200,200,200,0.35)"></div>
<div class="t" style="left:12px;top:672px;font-size:11px;letter-spacing:-0.1px">78-104</div>
<div class="a" style="left:64px;top:669px;width:1px;height:16px;background:repeating-linear-gradient(#808080 0 1px,transparent 1px 2px)"></div>
<div class="a" style="left:75px;top:669px;width:3px;height:16px;background:#7fc05a"></div>
<div class="a" style="left:87px;top:669px;width:1px;height:16px;background:repeating-linear-gradient(#808080 0 1px,transparent 1px 2px)"></div>
<svg class="a" style="left:83px;top:673px" width="9" height="9"><defs><linearGradient id="bg83673" x1="0" y1="0" x2="0" y2="1"><stop offset="0" stop-color="#fff"/><stop offset="1" stop-color="#d8dce4"/></linearGradient></defs><rect x="0.5" y="0.5" width="8" height="8" rx="1" fill="url(#bg83673)" stroke="#8e99ab"/><path d="M2 4.5H7M4.5 2V7" stroke="#2a3f78" stroke-width="1"/></svg>
<div class="a" style="left:92px;top:677px;width:6px;height:1px;background:repeating-linear-gradient(90deg,#808080 0 1px,transparent 1px 2px)"></div>
<div class="t" style="left:100px;top:672px;font-size:11px;letter-spacing:-0.1px">Wireframe draw</div>
<div class="t" style="left:392px;top:672px;font-size:11px;letter-spacing:-0.1px">1784.5...</div>
<div class="a" style="left:9px;top:685px;width:439px;height:16px;background:#ede0b0"></div>
<div class="a" style="left:54px;top:685px;width:1px;height:16px;background:#f4f8f0"></div>
<div class="a" style="left:389px;top:685px;width:1px;height:16px;background:#f4f8f0"></div>
<div class="a" style="left:9px;top:700px;width:439px;height:1px;background:rgba(200,200,200,0.35)"></div>
<div class="t" style="left:12px;top:688px;font-size:11px;letter-spacing:-0.1px">107-...</div>
<div class="a" style="left:64px;top:685px;width:1px;height:16px;background:repeating-linear-gradient(#808080 0 1px,transparent 1px 2px)"></div>
<div class="a" style="left:75px;top:685px;width:3px;height:16px;background:#7fc05a"></div>
<div class="a" style="left:87px;top:685px;width:1px;height:16px;background:repeating-linear-gradient(#808080 0 1px,transparent 1px 2px)"></div>
<svg class="a" style="left:83px;top:689px" width="9" height="9"><defs><linearGradient id="bg83689" x1="0" y1="0" x2="0" y2="1"><stop offset="0" stop-color="#fff"/><stop offset="1" stop-color="#d8dce4"/></linearGradient></defs><rect x="0.5" y="0.5" width="8" height="8" rx="1" fill="url(#bg83689)" stroke="#8e99ab"/><path d="M2 4.5H7" stroke="#2a3f78" stroke-width="1"/></svg>
<div class="a" style="left:92px;top:693px;width:6px;height:1px;background:repeating-linear-gradient(90deg,#808080 0 1px,transparent 1px 2px)"></div>
<div class="t" style="left:100px;top:688px;font-size:11px;letter-spacing:-0.1px">Apply post processing</div>
<div class="t" style="left:392px;top:688px;font-size:11px;letter-spacing:-0.1px">262.37...</div>
<div class="a" style="left:54px;top:701px;width:1px;height:16px;background:#f0f0f0"></div>
<div class="a" style="left:389px;top:701px;width:1px;height:16px;background:#f0f0f0"></div>
<div class="a" style="left:9px;top:716px;width:439px;height:1px;background:rgba(200,200,200,0.35)"></div>
<div class="t" style="left:12px;top:704px;font-size:11px;letter-spacing:-0.1px">109</div>
<div class="a" style="left:64px;top:701px;width:1px;height:16px;background:repeating-linear-gradient(#808080 0 1px,transparent 1px 2px)"></div>
<div class="a" style="left:75px;top:701px;width:3px;height:16px;background:#7fc05a"></div>
<div class="a" style="left:87px;top:701px;width:3px;height:16px;background:#ede0b0"></div>
<div class="a" style="left:100px;top:701px;width:1px;height:9px;background:repeating-linear-gradient(#808080 0 1px,transparent 1px 2px)"></div>
<div class="a" style="left:101px;top:709px;width:9px;height:1px;background:repeating-linear-gradient(90deg,#808080 0 1px,transparent 1px 2px)"></div>
<div class="t" style="left:112px;top:704px;font-size:11px;letter-spacing:-0.1px">vkCmdDraw(4,1)</div>
<div class="t" style="left:392px;top:704px;font-size:11px;letter-spacing:-0.1px">262.37...</div>
<div class="a" style="left:54px;top:717px;width:1px;height:16px;background:#f0f0f0"></div>
<div class="a" style="left:389px;top:717px;width:1px;height:16px;background:#f0f0f0"></div>
<div class="a" style="left:9px;top:732px;width:439px;height:1px;background:rgba(200,200,200,0.35)"></div>
<div class="t" style="left:12px;top:720px;font-size:11px;letter-spacing:-0.1px">111</div>
<div class="a" style="left:64px;top:717px;width:1px;height:16px;background:repeating-linear-gradient(#808080 0 1px,transparent 1px 2px)"></div>
<div class="a" style="left:75px;top:717px;width:3px;height:16px;background:#7fc05a"></div>
<div class="a" style="left:88px;top:717px;width:1px;height:9px;background:repeating-linear-gradient(#808080 0 1px,transparent 1px 2px)"></div>
<div class="a" style="left:89px;top:725px;width:9px;height:1px;background:repeating-linear-gradient(90deg,#808080 0 1px,transparent 1px 2px)"></div>
<div class="t" style="left:100px;top:720px;font-size:11px;letter-spacing:-0.1px">vkCmdEndRenderPass(C=Store, D=Store, S=Don't Care)</div>
<div class="a" style="left:54px;top:733px;width:1px;height:16px;background:#f0f0f0"></div>
<div class="a" style="left:389px;top:733px;width:1px;height:16px;background:#f0f0f0"></div>
<div class="a" style="left:9px;top:748px;width:439px;height:1px;background:rgba(200,200,200,0.35)"></div>
<div class="t" style="left:12px;top:736px;font-size:11px;letter-spacing:-0.1px">113</div>
<div class="a" style="left:64px;top:733px;width:1px;height:16px;background:repeating-linear-gradient(#808080 0 1px,transparent 1px 2px)"></div>
<div class="a" style="left:75px;top:733px;width:1px;height:16px;background:repeating-linear-gradient(#808080 0 1px,transparent 1px 2px)"></div>
<div class="a" style="left:76px;top:741px;width:10px;height:1px;background:repeating-linear-gradient(90deg,#808080 0 1px,transparent 1px 2px)"></div>
<div class="t" style="left:89px;top:736px;font-size:11px;letter-spacing:-0.1px">=> vkQueueSubmit(2)[1]: vkEndCommandBuffer(ID 138)</div>
<div class="a" style="left:9px;top:749px;width:439px;height:16px;background:linear-gradient(#d6d6d6,#c4c4c4)"></div>
<div class="a" style="left:54px;top:749px;width:1px;height:16px;background:#f4f4f4"></div>
<div class="a" style="left:9px;top:764px;width:439px;height:1px;background:rgba(200,200,200,0.35)"></div>
<div class="t" style="left:12px;top:752px;font-size:11px;letter-spacing:-0.1px">115</div>
<div class="a" style="left:64px;top:749px;width:1px;height:16px;background:repeating-linear-gradient(#808080 0 1px,transparent 1px 2px)"></div>
<div class="a" style="left:75px;top:749px;width:1px;height:16px;background:repeating-linear-gradient(#808080 0 1px,transparent 1px 2px)"></div>
<div class="a" style="left:76px;top:757px;width:10px;height:1px;background:repeating-linear-gradient(90deg,#808080 0 1px,transparent 1px 2px)"></div>
<svg class="a" style="left:85px;top:749px" width="17" height="16">
<path d="M1 5 Q4 1 8 3 Q11 5 14 2 L13 9 Q10 12 7 10 Q4 8 2 11 Z" fill="#7fd07a" stroke="#3f9a3a" stroke-width="1"/>
<path d="M14.5 1.5 L11 15" stroke="#c07a30" stroke-width="2.2" stroke-linecap="round"/></svg>
<div class="t" style="left:108px;top:752px;font-size:11px;letter-spacing:-0.1px">=> vkQueueSubmit(1)[0]: vkBeginCommandBuffer(ID 1...</div>
<div class="a" style="left:9px;top:765px;width:439px;height:16px;background:#ffe940"></div>
<div class="a" style="left:54px;top:765px;width:1px;height:16px;background:#f4f8f0"></div>
<div class="a" style="left:389px;top:765px;width:1px;height:16px;background:#f4f8f0"></div>
<div class="a" style="left:9px;top:780px;width:439px;height:1px;background:rgba(200,200,200,0.35)"></div>
<div class="t" style="left:12px;top:768px;font-size:11px;letter-spacing:-0.1px">116-...</div>
<div class="a" style="left:64px;top:765px;width:1px;height:16px;background:repeating-linear-gradient(#808080 0 1px,transparent 1px 2px)"></div>
<div class="a" style="left:75px;top:765px;width:1px;height:16px;background:repeating-linear-gradient(#808080 0 1px,transparent 1px 2px)"></div>
<svg class="a" style="left:71px;top:769px" width="9" height="9"><defs><linearGradient id="bg71769" x1="0" y1="0" x2="0" y2="1"><stop offset="0" stop-color="#fff"/><stop offset="1" stop-color="#d8dce4"/></linearGradient></defs><rect x="0.5" y="0.5" width="8" height="8" rx="1" fill="url(#bg71769)" stroke="#8e99ab"/><path d="M2 4.5H7M4.5 2V7" stroke="#2a3f78" stroke-width="1"/></svg>
<div class="a" style="left:80px;top:773px;width:6px;height:1px;background:repeating-linear-gradient(90deg,#808080 0 1px,transparent 1px 2px)"></div>
<div class="t" style="left:88px;top:768px;font-size:11px;letter-spacing:-0.1px">Text overlay</div>
<div class="t" style="left:392px;top:768px;font-size:11px;letter-spacing:-0.1px">511.7037</div>
<div class="a" style="left:9px;top:780px;width:458px;height:1px;background:#8a8a8a"></div>
<div class="a" style="left:448px;top:249px;width:19px;height:531px;background:#f0f0f0"></div>
<svg class="a" style="left:454px;top:254px" width="10" height="6"><path d="M0.5 5.5L4.5 1L8.5 5.5Z" fill="#707070"/></svg>
<svg class="a" style="left:454px;top:769px" width="10" height="6"><path d="M0.5 0.5L4.5 5L8.5 0.5Z" fill="#707070"/></svg>
<div class="a" style="left:451px;top:364px;width:15px;height:332px;border:1px solid #9a9a9a;border-radius:2px;background:linear-gradient(90deg,#f4f4f4,#e8e8e8 45%,#d4d4d4 55%,#dcdcdc)"></div>
<div class="a" style="left:455px;top:526px;width:7px;height:5px;background:repeating-linear-gradient(#8a8a8a 0 1px,transparent 1px 2px)"></div>
<div class="a" style="left:466px;top:223px;width:1px;height:557px;background:#c8c8c8"></div>
<!-- EB END -->
<!-- API START -->
<div class="a" style="left:470px;top:199px;width:1px;height:582px;background:#8a8a8a"></div>
<div class="a" style="left:470px;top:199px;width:239px;height:1px;background:#a0a0a0"></div>
<div class="a" style="left:471px;top:222px;width:235px;height:1px;background:#a0a0a0"></div>
<svg class="a" style="left:470px;top:199px" width="100" height="25"><path d="M6.5 23.5 L25.5 4.5 H83.5 Q86.5 4.5 86.5 7.5 V23.5" fill="#fff" stroke="#6e6e6e" stroke-width="1"/><rect x="7" y="23" width="79" height="2" fill="#fff"/></svg>
<div class="t" style="left:503px;top:206px;font-size:11px;letter-spacing:-0.1px">API Calls</div>
<svg class="a" style="left:670px;top:208px" width="12" height="8"><path d="M0.5 1.5H10.5L5.5 6.5Z" fill="#000"/></svg>
<svg class="a" style="left:686px;top:206px" width="12" height="12"><path d="M1.5 1.5L9.5 9.5M9.5 1.5L1.5 9.5" stroke="#000" stroke-width="1.6"/></svg>
<div class="a" style="left:474px;top:227px;width:210px;height:530px;background:#fff"></div>
<div class="a" style="left:474px;top:227px;width:210px;height:18px;background:linear-gradient(#ffffff 0%,#ffffff 40%,#f2f2f2 45%,#f2f2f2 100%)"></div>
<div class="a" style="left:474px;top:245px;width:210px;height:1px;background:#d8dce0"></div>
<div class="a" style="left:533px;top:227px;width:1px;height:18px;background:#e4e4e4"></div>
<div class="t" style="left:476px;top:233px;font-size:11px;letter-spacing:-0.1px">EID</div>
<div class="t" style="left:537px;top:233px;font-size:11px;letter-spacing:-0.1px">API Call</div>
<div class="a" style="left:684px;top:227px;width:20px;height:530px;background:#f0f0f0"></div>
<svg class="a" style="left:690px;top:233px" width="10" height="6"><path d="M0.5 5.5L4.5 1L8.5 5.5Z" fill="#a0a0a0"/></svg>
<svg class="a" style="left:690px;top:745px" width="10" height="6"><path d="M0.5 0.5L4.5 5L8.5 0.5Z" fill="#a0a0a0"/></svg>
<svg class="a" style="left:479px;top:250px" width="9" height="9"><defs><linearGradient id="apig" x1="0" y1="0" x2="0" y2="1"><stop offset="0" stop-color="#fff"/><stop offset="1" stop-color="#d8dce4"/></linearGradient></defs><rect x="0.5" y="0.5" width="8" height="8" rx="1" fill="url(#apig)" stroke="#8e99ab"/><path d="M2 4.5H7M4.5 2V7" stroke="#2a3f78" stroke-width="1"/></svg>
<div class="a" style="left:488px;top:254px;width:7px;height:1px;background:repeating-linear-gradient(90deg,#808080 0 1px,transparent 1px 2px)"></div>
<div class="t" style="left:498px;top:250px;font-size:11px;letter-spacing:-0.1px">114</div>
<div class="t" style="left:537px;top:250px;font-size:11px;letter-spacing:-0.1px">vkQueueSubmit</div>
<div class="a" style="left:474px;top:263px;width:210px;height:16px;border-radius:2px;background:linear-gradient(#dedede,#c8c8c8)"></div>
<div class="a" style="left:533px;top:263px;width:1px;height:16px;background:#f0f0f0"></div>
<div class="a" style="left:483px;top:259px;width:1px;height:12px;background:repeating-linear-gradient(#808080 0 1px,transparent 1px 2px)"></div>
<div class="a" style="left:484px;top:271px;width:10px;height:1px;background:repeating-linear-gradient(90deg,#808080 0 1px,transparent 1px 2px)"></div>
<div class="t" style="left:498px;top:265px;font-size:12px;font-weight:bold;letter-spacing:0.25px">115</div>
<div class="t" style="left:537px;top:265px;font-size:12px;font-weight:bold;letter-spacing:0.25px">=&gt; vkQueueSubmit(1)[...</div>
<div class="t" style="left:566px;top:761px;font-size:11px;letter-spacing:-0.1px">Callstack</div>
<div class="a" style="left:470px;top:780px;width:240px;height:1px;background:#8a8a8a"></div>
<div class="a" style="left:8px;top:780px;width:1272px;height:1px;background:#8a8a8a"></div>
<div class="a" style="left:8px;top:781px;width:1272px;height:1px;background:#fdfdfd"></div>
<div class="a" style="left:8px;top:782px;width:1272px;height:19px;background:#f0eded"></div>
<div class="a" style="left:8px;top:801px;width:1272px;height:2px;background:#fff"></div>
<svg class="a" style="left:11px;top:785px" width="17" height="14"><path d="M2 7.5 L6.5 12 L15 2.5" fill="none" stroke="#5cbf5c" stroke-width="3.2" stroke-linecap="round" stroke-linejoin="round"/></svg>
<div class="t" style="left:33px;top:787px;font-size:11.5px">debugmarker_2016.05.28_12.33.26_frame2.rdc loaded. No problems detected.</div>
<!-- API END -->
<!-- TV START -->
<div class="a" style="left:709px;top:199px;width:1px;height:582px;background:#8a8a8a"></div>
<div class="a" style="left:709px;top:199px;width:571px;height:1px;background:#a0a0a0"></div>
<div class="a" style="left:710px;top:222px;width:570px;height:1px;background:#a0a0a0"></div>
<svg class="a" style="left:714px;top:199px" width="128" height="25"><defs><linearGradient id="tabg" x1="0" y1="0" x2="0" y2="1"><stop offset="0" stop-color="#f2f2f2"/><stop offset="1" stop-color="#dedede"/></linearGradient></defs><path d="M2.5 23.5 L21.5 4.5 H105.5 Q108.5 4.5 108.5 7.5 V23.5" fill="url(#tabg)" stroke="#6e6e6e" stroke-width="1"/></svg>
<svg class="a" style="left:814px;top:199px" width="122" height="25"><defs><linearGradient id="tabg" x1="0" y1="0" x2="0" y2="1"><stop offset="0" stop-color="#f2f2f2"/><stop offset="1" stop-color="#dedede"/></linearGradient></defs><path d="M2.5 23.5 L21.5 4.5 H99.5 Q102.5 4.5 102.5 7.5 V23.5" fill="url(#tabg)" stroke="#6e6e6e" stroke-width="1"/></svg>
<svg class="a" style="left:1030px;top:199px" width="148" height="25"><defs><linearGradient id="tabg" x1="0" y1="0" x2="0" y2="1"><stop offset="0" stop-color="#f2f2f2"/><stop offset="1" stop-color="#dedede"/></linearGradient></defs><path d="M2.5 23.5 L21.5 4.5 H125.5 Q128.5 4.5 128.5 7.5 V23.5" fill="url(#tabg)" stroke="#6e6e6e" stroke-width="1"/></svg>
<svg class="a" style="left:907px;top:199px" width="137" height="25"><defs><linearGradient id="tabg" x1="0" y1="0" x2="0" y2="1"><stop offset="0" stop-color="#f2f2f2"/><stop offset="1" stop-color="#dedede"/></linearGradient></defs><path d="M2.5 23.5 L21.5 4.5 H114.5 Q117.5 4.5 117.5 7.5 V23.5" fill="#fff" stroke="#6e6e6e" stroke-width="1"/><rect x="3" y="23" width="114" height="2" fill="#fff"/></svg>
<div class="t" style="left:744px;top:206px;font-size:11px;">Pipeline State</div>
<div class="t" style="left:843px;top:206px;font-size:11px;">Mesh Output</div>
<div class="t" style="left:938px;top:206px;font-size:11px;">Texture Viewer</div>
<div class="t" style="left:1047px;top:206px;font-size:11px;">Capture Executable</div>
<svg class="a" style="left:1243px;top:208px" width="12" height="8"><path d="M0.5 1.5H10.5L5.5 6.5Z" fill="#000"/></svg>
<svg class="a" style="left:1259px;top:206px" width="12" height="12"><path d="M1.5 1.5L9.5 9.5M9.5 1.5L1.5 9.5" stroke="#000" stroke-width="1.6"/></svg>
<div class="a" style="left:713px;top:227px;width:184px;height:23px;border-radius:3px;background:linear-gradient(#fbfbfb,#f4f4f4)"></div>
<div class="t" style="left:717px;top:234px;font-size:11.5px;">Channels</div>
<div class="a" style="left:770px;top:231px;width:121px;height:18px;background:#fff"></div>
<div class="a" style="left:876px;top:231px;width:15px;height:18px;background:#fafafa"></div>
<svg class="a" style="left:879px;top:238px" width="8" height="5"><path d="M0.5 0.5H7.5L4 4.5Z" fill="#000"/></svg>
<div class="t" style="left:773px;top:235px;font-size:11.5px;">RGBA</div>
<div class="a" style="left:895px;top:230px;width:1px;height:17px;background:#c4c4c4"></div>
<div class="a" style="left:902px;top:228px;width:24px;height:22px;border:1px solid #3d9be0;background:#f2f2f2"></div>
<div class="a" style="left:925px;top:228px;width:24px;height:22px;border:1px solid #3d9be0;background:#f2f2f2"></div>
<div class="a" style="left:948px;top:228px;width:23px;height:22px;border:1px solid #3d9be0;background:#f2f2f2"></div>
<div class="t" style="left:909px;top:234px;font-size:11.5px;">R</div>
<div class="t" style="left:932px;top:234px;font-size:11.5px;">G</div>
<div class="t" style="left:955px;top:234px;font-size:11.5px;">B</div>
<div class="t" style="left:976px;top:234px;font-size:11.5px;margin-left:2px">A</div>
<div class="a" style="left:994px;top:228px;width:23px;height:22px;border:1px solid #3d9be0;background:#f2f2f2"></div>
<div class="a" style="left:998px;top:231px;width:16px;height:16px;border-radius:50%;background:conic-gradient(#ff4040,#ff40ff,#4040ff,#40ffff,#40ff40,#ffff40,#ff4040)"></div>
<div class="a" style="left:998px;top:231px;width:16px;height:16px;border-radius:50%;background:radial-gradient(circle,#fff 0%,rgba(255,255,255,0.6) 30%,rgba(255,255,255,0) 70%)"></div>
<div class="a" style="left:1020px;top:231px;width:16px;height:16px;background:repeating-linear-gradient(135deg,#a8bcd8 0 2px,#e6ecf4 2px 4px)"></div>
<div class="a" style="left:1043px;top:231px;width:1px;height:16px;background:#c4c4c4"></div>
<div class="a" style="left:1046px;top:228px;width:23px;height:22px;border:1px solid #3d9be0;background:#f2f2f2"></div>
<div class="t" style="left:1053px;top:235px;font-size:11.5px;color:#6a7a90">γ</div>
<div class="a" style="left:1071px;top:230px;width:1px;height:17px;background:#c4c4c4"></div>
<div class="a" style="left:713px;top:252px;width:421px;height:24px;border-radius:3px;background:linear-gradient(#fbfbfb,#f4f4f4)"></div>
<div class="t" style="left:717px;top:259px;font-size:11.5px;">Subresource</div>
<div class="a" style="left:788px;top:256px;width:1px;height:16px;background:#c4c4c4"></div>
<div class="t" style="left:794px;top:259px;font-size:11.5px;">Mip</div>
<div class="a" style="left:820px;top:254px;width:120px;height:21px;border:1px solid #adadad;background:#f0f0f0"></div>
<svg class="a" style="left:928px;top:262px" width="8" height="5"><path d="M0.5 0.5H7.5L4 4.5Z" fill="#8a8a8a"/></svg>
<div class="t" style="left:823px;top:259px;font-size:11.5px;color:#888">0 - 1272x690</div>
<div class="t" style="left:945px;top:259px;font-size:11.5px;">Slice/Face</div>
<div class="a" style="left:1004px;top:254px;width:120px;height:21px;border:1px solid #adadad;background:#f0f0f0"></div>
<svg class="a" style="left:1112px;top:262px" width="8" height="5"><path d="M0.5 0.5H7.5L4 4.5Z" fill="#8a8a8a"/></svg>
<div class="a" style="left:1130px;top:257px;width:1px;height:18px;background:#c4c4c4"></div>
<div class="a" style="left:1139px;top:252px;width:119px;height:24px;border-radius:3px;background:linear-gradient(#fbfbfb,#f4f4f4)"></div>
<div class="t" style="left:1143px;top:259px;font-size:11.5px;">Actions</div>
<svg class="a" style="left:1190px;top:256px" width="16" height="16"><rect x="1" y="1" width="14" height="14" rx="1" fill="#3a3aa8"/><rect x="3.5" y="1.5" width="9" height="6" fill="#e8eaf8"/><rect x="5" y="10" width="6" height="5" fill="#1a1a40"/><rect x="8" y="11" width="2" height="2" fill="#c0c0d0"/></svg>
<svg class="a" style="left:1213px;top:255px" width="17" height="17"><path d="M2.5 1.5H10.5L14.5 5.5V15.5H2.5Z" fill="#fafafa" stroke="#c0c0c0"/><rect x="2" y="10" width="13" height="5" rx="2.5" fill="none" stroke="#505050" stroke-width="1.8"/><path d="M6 12.5H11" stroke="#505050" stroke-width="1.4"/></svg>
<svg class="a" style="left:1235px;top:255px" width="17" height="17"><path d="M4.5 1.5H12.5L16 5V15.5H4.5Z" fill="#fafafa" stroke="#c8c8c8"/><path d="M5 5.5L1.5 8.5L5 11.5M9 5.5L12.5 8.5L9 11.5" fill="none" stroke="#4a8ad8" stroke-width="2"/></svg>
<div class="a" style="left:1258px;top:265px;width:1px;height:11px;background:#c4c4c4"></div>
<div class="a" style="left:713px;top:277px;width:259px;height:24px;border-radius:3px;background:linear-gradient(#fbfbfb,#f4f4f4)"></div>
<div class="t" style="left:716px;top:284px;font-size:11.5px;">Zoom</div>
<div class="t" style="left:756px;top:284px;font-size:11.5px;">1:1</div>
<div class="a" style="left:778px;top:278px;width:46px;height:22px;border:1px solid #3d9be0;background:#f2f2f2"></div>
<svg class="a" style="left:780px;top:281px" width="18" height="17"><g fill="#5cb85c"><path d="M1 1H6L4.5 2.5L7 5L5 7L2.5 4.5L1 6Z"/><path d="M17 1H12L13.5 2.5L11 5L13 7L15.5 4.5L17 6Z"/><path d="M1 16H6L4.5 14.5L7 12L5 10L2.5 12.5L1 11Z"/><path d="M17 16H12L13.5 14.5L11 12L13 10L15.5 12.5L17 11Z"/></g></svg>
<div class="t" style="left:805px;top:284px;font-size:11.5px;">Fit</div>
<div class="a" style="left:826px;top:279px;width:121px;height:20px;background:#fff"></div>
<div class="a" style="left:932px;top:279px;width:15px;height:20px;background:#fafafa"></div>
<svg class="a" style="left:935px;top:287px" width="8" height="5"><path d="M0.5 0.5H7.5L4 4.5Z" fill="#000"/></svg>
<div class="t" style="left:829px;top:284px;font-size:11.5px;">32%</div>
<svg class="a" style="left:953px;top:281px" width="11" height="16"><path d="M5.5 0.5L10 5H7.2V11H10L5.5 15.5L1 11H3.8V5H1Z" fill="#6cc06c" stroke="#3f8f3f" stroke-width="0.8"/></svg>
<div class="a" style="left:972px;top:284px;width:1px;height:16px;background:#c4c4c4"></div>
<div class="a" style="left:985px;top:277px;width:172px;height:24px;border-radius:3px;background:linear-gradient(#fbfbfb,#f4f4f4)"></div>
<div class="t" style="left:989px;top:284px;font-size:11.5px;">Overlay</div>
<div class="a" style="left:1033px;top:279px;width:120px;height:20px;background:#fff"></div>
<div class="a" style="left:1138px;top:279px;width:15px;height:20px;background:#fafafa"></div>
<svg class="a" style="left:1141px;top:287px" width="8" height="5"><path d="M0.5 0.5H7.5L4 4.5Z" fill="#000"/></svg>
<div class="t" style="left:1036px;top:284px;font-size:11.5px;">None</div>
<div class="a" style="left:1157px;top:285px;width:1px;height:15px;background:#c4c4c4"></div>
<div class="a" style="left:713px;top:302px;width:551px;height:23px;border-radius:3px;background:linear-gradient(#fbfbfb,#f4f4f4)"></div>
<div class="t" style="left:716px;top:309px;font-size:11.5px;">Range</div>
<div class="a" style="left:754px;top:303px;width:111px;height:22px;background:#fff"></div>
<div class="t" style="left:757px;top:309px;font-size:11.5px;">0.00</div>
<div class="a" style="left:870px;top:307px;width:193px;height:14px;border:1px solid #1a1a1a;border-top-width:2px;background:#a8a8a8"></div>
<svg class="a" style="left:866px;top:303px" width="11" height="11"><path d="M0.5 0.5H10.5L5.5 10Z" fill="#000"/></svg>
<svg class="a" style="left:1055px;top:312px" width="12" height="11"><path d="M6 0.5L11.5 10.5H0.5Z" fill="#fff" stroke="#9a9a9a"/></svg>
<div class="a" style="left:1067px;top:303px;width:110px;height:22px;background:#fff"></div>
<div class="t" style="left:1070px;top:309px;font-size:11.5px;">1.00</div>
<svg class="a" style="left:1180px;top:305px" width="17" height="17"><circle cx="6.5" cy="6.5" r="5" fill="#e4eef8" stroke="#c89050" stroke-width="1.8"/><path d="M10 10L15 15" stroke="#c89050" stroke-width="2.6" stroke-linecap="round"/></svg>
<svg class="a" style="left:1202px;top:305px" width="18" height="17"><path d="M2.5 14.5L9.5 7.5" stroke="#202020" stroke-width="3.2" stroke-linecap="round"/><path d="M3.2 13.2L8.8 7.6" stroke="#a0a0a0" stroke-width="0.8"/><path d="M12.5 0.8L13.6 4.3L17 3.2L14.6 6L17 8.8L13.6 7.7L12.5 11.2L11.4 7.7L8 8.8L10.4 6L8 3.2L11.4 4.3Z" fill="#f8c828" stroke="#e09010" stroke-width="0.5"/><circle cx="12.5" cy="6" r="1.6" fill="#fff8d0"/></svg>
<div class="a" style="left:1253px;top:316px;width:11px;height:10px;border-radius:1px;background:linear-gradient(#e0e0e0,#a8a8a8)"></div>
<svg class="a" style="left:1255px;top:318px" width="7" height="7"><path d="M0.5 0.5H6.5M0.5 2.5H6.5L3.5 6Z" fill="#222" stroke="#222" stroke-width="0.8"/></svg>
<!-- TV END -->
<!-- TEX START -->
<div class="a" style="left:713px;top:333px;width:423px;height:443px;border:1px solid #a0a0a0;background:#f0f0f0"></div>
<div class="a" style="left:714px;top:356px;width:421px;height:1px;background:#a0a0a0"></div>
<svg class="a" style="left:713px;top:333px" width="110" height="25"><path d="M6.5 23.5 L24.5 5.5 H99.5 Q103.5 5.5 103.5 9.5 V23.5" fill="#fff" stroke="#6e6e6e" stroke-width="1"/><rect x="7" y="23" width="96" height="2" fill="#fff"/></svg>
<div class="a" style="left:740px;top:339px;width:16px;height:16px;background:#27b473"></div>
<svg class="a" style="left:740px;top:339px" width="16" height="16"><circle cx="8" cy="6.5" r="2.8" fill="none" stroke="#e8fff0" stroke-width="1.4"/><path d="M3 11.5 Q8 8 13 11.5" fill="none" stroke="#e8fff0" stroke-width="1.4"/></svg>
<div class="t" style="left:759px;top:341px;font-size:11.5px;font-weight:bold">Unbound</div>
<svg class="a" style="left:1115px;top:343px" width="12" height="8"><path d="M0.5 1.5H10.5L5.5 6.5Z" fill="#000"/></svg>
<div class="a" id="img" style="left:714px;top:357px;width:405px;height:363px;background:#000;overflow:hidden"></div>
<div class="a" style="left:1119px;top:357px;width:16px;height:379px;background:#f0f0f0"></div>
<svg class="a" style="left:1123px;top:362px" width="10" height="6"><path d="M0.5 5.5L4.5 1L8.5 5.5Z" fill="#a0a0a0"/></svg>
<svg class="a" style="left:1123px;top:709px" width="10" height="6"><path d="M0.5 0.5L4.5 5L8.5 0.5Z" fill="#a0a0a0"/></svg>
<div class="a" style="left:714px;top:720px;width:405px;height:16px;background:#f0f0f0"></div>
<svg class="a" style="left:718px;top:723px" width="6" height="10"><path d="M5.5 0.5L1 4.5L5.5 8.5Z" fill="#a0a0a0"/></svg>
<svg class="a" style="left:1108px;top:723px" width="6" height="10"><path d="M0.5 0.5L5 4.5L0.5 8.5Z" fill="#a0a0a0"/></svg>
<div class="a" style="left:714px;top:735px;width:421px;height:1px;background:#a0a0a0"></div>
<div class="a" style="left:714px;top:736px;width:421px;height:39px;background:#f0eded"></div>
<div class="t" style="left:718px;top:742px;font-size:11.67px;font-family:'Liberation Mono',monospace">Presentable Image 1 - 1272x690 1 mips - B8G8R8A8_UNORM</div>
<div class="a" style="left:715px;top:759px;width:31px;height:14px;background:#3a3a3a"></div>
<div class="a" style="left:1140px;top:333px;width:136px;height:18px;background:linear-gradient(#d4e0ee,#bfcfe2)"></div>
<div class="t" style="left:1146px;top:338px;font-size:11px;color:#4a5a70">Outputs</div>
<svg class="a" style="left:1259px;top:336px" width="12" height="12"><path d="M3 1.5h5.5M3.5 1v6M7.5 1v6" stroke="#000" stroke-width="1.4" fill="none"/><path d="M1 7.5h8.5M5 7.5v4" stroke="#000" stroke-width="1.3" fill="none"/></svg>
<div class="a" style="left:1140px;top:351px;width:136px;height:270px;border:1px solid #8a8a8a;background:#f0f0f0"></div>
<div class="a" style="left:1147px;top:358px;width:122px;height:93px;background:#e0171d"></div>
<div class="a" style="left:1151px;top:362px;width:114px;height:59px;background:linear-gradient(90deg,#e6e6ee 0,#e6e6ee 56%,#dcdce4 56%)"></div>
<div class="a" style="left:1151px;top:421px;width:114px;height:26px;background:#c4d2de"></div>
<div class="t" style="left:1155px;top:427px;font-size:17px;font-weight:bold;color:#000;letter-spacing:0.6px">FB0</div>
<div class="t" style="left:1206px;top:431px;font-size:11px;letter-spacing:-0.1px">Unbound</div>
<div class="a" style="left:1140px;top:621px;width:136px;height:20px;background:#e4e4e4"></div>
<div class="a" style="left:1140px;top:620px;width:67px;height:22px;border:1px solid #8a8a8a;border-top:none;border-radius:0 0 3px 3px;background:#f2f2f2"></div>
<div class="a" style="left:1142px;top:624px;width:16px;height:16px;background:#27b473"></div>
<svg class="a" style="left:1142px;top:624px" width="16" height="16"><circle cx="8" cy="6.5" r="2.8" fill="none" stroke="#e8fff0" stroke-width="1.4"/><path d="M3 11.5 Q8 8 13 11.5" fill="none" stroke="#e8fff0" stroke-width="1.4"/></svg>
<div class="a" style="left:1209px;top:624px;width:16px;height:16px;background:#27b473"></div>
<svg class="a" style="left:1209px;top:624px" width="16" height="16"><circle cx="8" cy="6.5" r="2.8" fill="none" stroke="#e8fff0" stroke-width="1.4"/><path d="M3 11.5 Q8 8 13 11.5" fill="none" stroke="#e8fff0" stroke-width="1.4"/></svg>
<div class="t" style="left:1160px;top:626px;font-size:11.5px;">Outputs</div>
<div class="t" style="left:1227px;top:626px;font-size:11.5px;color:#8a8a8a">Inputs</div>
<div class="a" style="left:1266px;top:624px;width:1px;height:14px;background:#a0a0a0"></div>
<div class="a" style="left:1140px;top:647px;width:136px;height:17px;background:linear-gradient(#d4e0ee,#bfcfe2)"></div>
<div class="t" style="left:1145px;top:651px;font-size:11px;color:#4a5a70">Pixel Context</div>
<svg class="a" style="left:1259px;top:650px" width="12" height="12"><path d="M3 1.5h5.5M3.5 1v6M7.5 1v6" stroke="#000" stroke-width="1.4" fill="none"/><path d="M1 7.5h8.5M5 7.5v4" stroke="#000" stroke-width="1.3" fill="none"/></svg>
<div class="a" style="left:1143px;top:667px;width:130px;height:78px;background:#000"></div>
<div class="a" style="left:1207px;top:705px;width:10px;height:10px;border:1.5px solid #fff"></div>
<div class="a" style="left:1151px;top:752px;width:46px;height:21px;border:1px solid #707070;border-radius:3px;background:linear-gradient(#f2f2f2 0,#ebebeb 50%,#dddddd 50%,#cfcfcf 100%)"></div>
<div class="t" style="left:1156px;top:757px;font-size:11px;letter-spacing:-0.1px">History</div>
<div class="a" style="left:1218px;top:752px;width:47px;height:21px;border:1px solid #707070;border-radius:3px;background:linear-gradient(#f2f2f2 0,#ebebeb 50%,#dddddd 50%,#cfcfcf 100%)"></div>
<div class="t" style="left:1226px;top:757px;font-size:11px;letter-spacing:-0.1px">Debug</div>
<svg class="a" style="left:1266px;top:789px" width="12" height="12"><g fill="#b0b0b0"><rect x="9" y="1" width="2" height="2"/><rect x="6" y="4" width="2" height="2"/><rect x="9" y="4" width="2" height="2"/><rect x="3" y="7" width="2" height="2"/><rect x="6" y="7" width="2" height="2"/><rect x="9" y="7" width="2" height="2"/></g></svg>
<!-- TEX END -->
<!-- SCENE START -->
<svg class="a" style="left:714px;top:357px" width="405" height="363" viewBox="0 0 405 363">
<rect width="405" height="363" fill="#000"/>
<defs><clipPath id="lh"><rect x="0" y="0" width="203" height="221"/></clipPath><radialGradient id="chest" cx="0.4" cy="0.4" r="0.7"><stop offset="0" stop-color="#ffe070"/><stop offset="0.5" stop-color="#d09030"/><stop offset="1" stop-color="#603810"/></radialGradient><radialGradient id="redcap" cx="0.45" cy="0.45" r="0.6"><stop offset="0" stop-color="#ff3030"/><stop offset="0.7" stop-color="#d01010"/><stop offset="1" stop-color="#600000"/></radialGradient></defs>
<g clip-path="url(#lh)">
<polygon points="179,0 203,0 203,96 160,96 176,82" fill="#33120c"/>
<polygon points="179,0 186,0 184,82 176,82" fill="#2e100c"/>
<polygon points="79,100 118,83.5 178,83.5 178,88 138,98.5 89,103" fill="#3e1812"/>
<polygon points="0,136 47,120 87,100.5 120,95 176,88 172,85 118,117 83,146 39.5,181 6,221 0,221" fill="#2a3616"/>
<path d="M86 104 Q115 92 148 96 Q130 106 92 108Z" fill="#3c3c48"/>
<polygon points="6,221 39.5,181 83,146 118,117 172,85 203,82 203,100 178,110 135,133 75,178 42,221" fill="#3a1510"/>
<polygon points="10,221 43,183 86,149 121,120 174,88 176,92 124,124 89,153 47,187 16,221" fill="#2a0c06" opacity="0.6"/>
<polygon points="42,221 75,178 135,133 178,110 203,100 203,221" fill="#263212"/>
<polygon points="150,116 175,104 203,98 203,125 185,130 160,128" fill="#2e3a18"/>
<polygon points="165,124 185,118 203,116 203,138 175,136" fill="#3a1e16"/>
<path d="M34.3 129.7 L49.7 129.7 Q45.4 121.3 42.7 113.0 Q33.1 121.3 34.3 129.7Z" fill="#5c9c3a"/>
<path d="M42.0 129.7 L49.7 129.7 Q45.4 121.3 42.7 113.0 Q40.8 121.3 42.0 129.7Z" fill="#345f20" opacity="0.55"/>
<path d="M37.7 146.3 L55.2 146.3 Q54.2 133.0 46.0 119.7 Q40.2 133.0 37.7 146.3Z" fill="#5c9c3a"/>
<path d="M46.4 146.3 L55.2 146.3 Q54.2 133.0 46.0 119.7 Q48.9 133.0 46.4 146.3Z" fill="#345f20" opacity="0.55"/>
<path d="M49.3 139.7 L63.3 139.7 Q58.0 121.3 52.7 103.0 Q46.8 121.3 49.3 139.7Z" fill="#5c9c3a"/>
<path d="M56.3 139.7 L63.3 139.7 Q58.0 121.3 52.7 103.0 Q53.8 121.3 56.3 139.7Z" fill="#345f20" opacity="0.55"/>
<path d="M57.7 136.3 L73.1 136.3 Q73.4 120.5 66.0 104.7 Q61.1 120.5 57.7 136.3Z" fill="#5c9c3a"/>
<path d="M65.4 136.3 L73.1 136.3 Q73.4 120.5 66.0 104.7 Q68.8 120.5 65.4 136.3Z" fill="#345f20" opacity="0.55"/>
<path d="M66.0 146.3 L80.0 146.3 Q75.0 129.7 71.0 113.0 Q63.8 129.7 66.0 146.3Z" fill="#5c9c3a"/>
<path d="M73.0 146.3 L80.0 146.3 Q75.0 129.7 71.0 113.0 Q70.8 129.7 73.0 146.3Z" fill="#345f20" opacity="0.55"/>
<path d="M72.7 129.7 L85.3 129.7 Q86.6 114.7 82.7 99.7 Q76.5 114.7 72.7 129.7Z" fill="#5c9c3a"/>
<path d="M79.0 129.7 L85.3 129.7 Q86.6 114.7 82.7 99.7 Q82.8 114.7 79.0 129.7Z" fill="#345f20" opacity="0.55"/>
<path d="M79.3 129.7 L91.9 129.7 Q89.1 116.3 86.0 103.0 Q79.0 116.3 79.3 129.7Z" fill="#5c9c3a"/>
<path d="M85.6 129.7 L91.9 129.7 Q89.1 116.3 86.0 103.0 Q85.3 116.3 85.6 129.7Z" fill="#345f20" opacity="0.55"/>
<path d="M86.0 126.3 L97.2 126.3 Q98.3 118.0 94.3 109.7 Q89.3 118.0 86.0 126.3Z" fill="#5c9c3a"/>
<path d="M91.6 126.3 L97.2 126.3 Q98.3 118.0 94.3 109.7 Q94.9 118.0 91.6 126.3Z" fill="#345f20" opacity="0.55"/>
<path d="M42.7 143.0 L55.3 143.0 Q52.6 133.0 49.3 123.0 Q42.5 133.0 42.7 143.0Z" fill="#5c9c3a"/>
<path d="M49.0 143.0 L55.3 143.0 Q52.6 133.0 49.3 123.0 Q48.8 133.0 49.0 143.0Z" fill="#345f20" opacity="0.55"/>
<path d="M61.0 123.0 L72.2 123.0 Q67.2 112.2 57.7 101.3 Q58.3 112.2 61.0 123.0Z" fill="#5c9c3a"/>
<path d="M66.6 123.0 L72.2 123.0 Q67.2 112.2 57.7 101.3 Q63.9 112.2 66.6 123.0Z" fill="#345f20" opacity="0.55"/>
<path d="M52.7 221.3 L70.9 221.3 Q59.1 199.7 34.3 178.0 Q44.5 199.7 52.7 221.3Z" fill="#5c9c3a"/>
<path d="M61.8 221.3 L70.9 221.3 Q59.1 199.7 34.3 178.0 Q53.6 199.7 61.8 221.3Z" fill="#345f20" opacity="0.55"/>
<path d="M66.0 206.3 L82.8 206.3 Q74.6 186.3 56.0 166.3 Q61.1 186.3 66.0 206.3Z" fill="#5c9c3a"/>
<path d="M74.4 206.3 L82.8 206.3 Q74.6 186.3 56.0 166.3 Q69.5 186.3 74.4 206.3Z" fill="#345f20" opacity="0.55"/>
<path d="M86.0 211.3 L101.4 211.3 Q92.7 195.5 74.3 179.7 Q80.4 195.5 86.0 211.3Z" fill="#5c9c3a"/>
<path d="M93.7 211.3 L101.4 211.3 Q92.7 195.5 74.3 179.7 Q88.1 195.5 93.7 211.3Z" fill="#345f20" opacity="0.55"/>
<path d="M72.7 221.3 L86.7 221.3 Q76.7 205.5 59.3 189.7 Q65.5 205.5 72.7 221.3Z" fill="#5c9c3a"/>
<path d="M79.7 221.3 L86.7 221.3 Q76.7 205.5 59.3 189.7 Q72.5 205.5 79.7 221.3Z" fill="#345f20" opacity="0.55"/>
<path d="M49.3 213.0 L60.5 213.0 Q54.6 199.7 42.7 186.3 Q45.6 199.7 49.3 213.0Z" fill="#5c9c3a"/>
<path d="M54.9 213.0 L60.5 213.0 Q54.6 199.7 42.7 186.3 Q51.2 199.7 54.9 213.0Z" fill="#345f20" opacity="0.55"/>
<path d="M92.7 189.7 L110.9 189.7 Q100.0 173.8 91.0 158.0 Q85.4 173.8 92.7 189.7Z" fill="#5c9c3a"/>
<path d="M101.8 189.7 L110.9 189.7 Q100.0 173.8 91.0 158.0 Q94.5 173.8 101.8 189.7Z" fill="#345f20" opacity="0.55"/>
<path d="M106.0 203.0 L122.8 203.0 Q116.7 181.3 102.7 159.7 Q103.3 181.3 106.0 203.0Z" fill="#5c9c3a"/>
<path d="M114.4 203.0 L122.8 203.0 Q116.7 181.3 102.7 159.7 Q111.7 181.3 114.4 203.0Z" fill="#345f20" opacity="0.55"/>
<path d="M119.3 203.0 L136.1 203.0 Q125.4 184.7 116.0 166.3 Q112.0 184.7 119.3 203.0Z" fill="#5c9c3a"/>
<path d="M127.7 203.0 L136.1 203.0 Q125.4 184.7 116.0 166.3 Q120.4 184.7 127.7 203.0Z" fill="#345f20" opacity="0.55"/>
<path d="M129.3 173.0 L143.3 173.0 Q144.6 158.0 139.3 143.0 Q133.4 158.0 129.3 173.0Z" fill="#5c9c3a"/>
<path d="M136.3 173.0 L143.3 173.0 Q144.6 158.0 139.3 143.0 Q140.4 158.0 136.3 173.0Z" fill="#345f20" opacity="0.55"/>
<path d="M132.7 221.3 L160.7 221.3 Q151.0 198.8 142.7 176.3 Q128.6 198.8 132.7 221.3Z" fill="#5c9c3a"/>
<path d="M146.7 221.3 L160.7 221.3 Q151.0 198.8 142.7 176.3 Q142.6 198.8 146.7 221.3Z" fill="#345f20" opacity="0.55"/>
<path d="M152.7 221.3 L177.9 221.3 Q178.9 190.5 169.3 159.7 Q158.8 190.5 152.7 221.3Z" fill="#5c9c3a"/>
<path d="M165.3 221.3 L177.9 221.3 Q178.9 190.5 169.3 159.7 Q171.4 190.5 165.3 221.3Z" fill="#345f20" opacity="0.55"/>
<path d="M149.3 186.3 L164.7 186.3 Q157.9 159.7 152.7 133.0 Q145.6 159.7 149.3 186.3Z" fill="#5c9c3a"/>
<path d="M157.0 186.3 L164.7 186.3 Q157.9 159.7 152.7 133.0 Q153.3 159.7 157.0 186.3Z" fill="#345f20" opacity="0.55"/>
<path d="M162.7 173.0 L178.1 173.0 Q178.8 154.7 172.7 136.3 Q166.5 154.7 162.7 173.0Z" fill="#5c9c3a"/>
<path d="M170.4 173.0 L178.1 173.0 Q178.8 154.7 172.7 136.3 Q174.2 154.7 170.4 173.0Z" fill="#345f20" opacity="0.55"/>
<path d="M172.7 189.7 L188.1 189.7 Q181.7 161.3 176.0 133.0 Q169.4 161.3 172.7 189.7Z" fill="#5c9c3a"/>
<path d="M180.4 189.7 L188.1 189.7 Q181.7 161.3 176.0 133.0 Q177.1 161.3 180.4 189.7Z" fill="#345f20" opacity="0.55"/>
<path d="M182.7 176.3 L196.7 176.3 Q195.0 158.0 187.7 139.7 Q183.8 158.0 182.7 176.3Z" fill="#5c9c3a"/>
<path d="M189.7 176.3 L196.7 176.3 Q195.0 158.0 187.7 139.7 Q190.8 158.0 189.7 176.3Z" fill="#345f20" opacity="0.55"/>
<path d="M192.7 221.3 L213.7 221.3 Q207.1 183.8 201.0 146.3 Q190.3 183.8 192.7 221.3Z" fill="#5c9c3a"/>
<path d="M203.2 221.3 L213.7 221.3 Q207.1 183.8 201.0 146.3 Q200.8 183.8 203.2 221.3Z" fill="#345f20" opacity="0.55"/>
<path d="M179.3 221.3 L207.3 221.3 Q207.2 198.8 197.7 176.3 Q184.8 198.8 179.3 221.3Z" fill="#5c9c3a"/>
<path d="M193.3 221.3 L207.3 221.3 Q207.2 198.8 197.7 176.3 Q198.8 198.8 193.3 221.3Z" fill="#345f20" opacity="0.55"/>
<path d="M112.7 159.7 L125.3 159.7 Q125.0 144.7 119.3 129.7 Q114.9 144.7 112.7 159.7Z" fill="#5c9c3a"/>
<path d="M119.0 159.7 L125.3 159.7 Q125.0 144.7 119.3 129.7 Q121.2 144.7 119.0 159.7Z" fill="#345f20" opacity="0.55"/>
<path d="M136.0 159.7 L147.2 159.7 Q141.0 149.7 134.3 139.7 Q132.0 149.7 136.0 159.7Z" fill="#5c9c3a"/>
<path d="M141.6 159.7 L147.2 159.7 Q141.0 149.7 134.3 139.7 Q137.6 149.7 141.6 159.7Z" fill="#345f20" opacity="0.55"/>
<path d="M152.7 116.3 L166.7 116.3 Q161.3 108.0 156.0 99.7 Q150.1 108.0 152.7 116.3Z" fill="#5c9c3a"/>
<path d="M159.7 116.3 L166.7 116.3 Q161.3 108.0 156.0 99.7 Q157.1 108.0 159.7 116.3Z" fill="#345f20" opacity="0.55"/>
<rect x="101.2" y="106.0" width="1.8" height="4.2" fill="#f0f0e0"/>
<ellipse cx="102.0" cy="106.0" rx="3.2" ry="1.8" fill="#b070f0"/>
<rect x="117.8" y="104.0" width="1.8" height="4.2" fill="#f0f0e0"/>
<ellipse cx="118.6" cy="104.0" rx="3.2" ry="1.8" fill="#b070f0"/>
<rect x="112.7" y="136.0" width="1.8" height="7.8" fill="#f0f0e0"/>
<ellipse cx="113.5" cy="136.0" rx="6.0" ry="3.3" fill="#b070f0"/>
<rect x="98.5" y="150.0" width="1.8" height="7.2" fill="#f0f0e0"/>
<ellipse cx="99.3" cy="150.0" rx="5.5" ry="3.0" fill="#b070f0"/>
<rect x="119.8" y="149.0" width="1.8" height="5.2" fill="#f0f0e0"/>
<ellipse cx="120.6" cy="149.0" rx="4.0" ry="2.2" fill="#b070f0"/>
<rect x="174.6" y="106.0" width="1.8" height="3.1" fill="#f0f0e0"/>
<ellipse cx="175.4" cy="106.0" rx="2.4" ry="1.3" fill="#b070f0"/>
<rect x="179.2" y="104.0" width="1.8" height="3.1" fill="#f0f0e0"/>
<ellipse cx="180.0" cy="104.0" rx="2.4" ry="1.3" fill="#b070f0"/>
</g>
<rect x="196.2" y="95.0" width="1.8" height="5.2" fill="#f0f0e0"/>
<ellipse cx="197.0" cy="95.0" rx="4.0" ry="2.2" fill="#b070f0"/>
<rect x="202.2" y="97.0" width="1.8" height="3.2" fill="#f0f0e0"/>
<ellipse cx="203.0" cy="97.0" rx="2.5" ry="1.4" fill="#b070f0"/>
<path d="M216.1 99.6 L217.1 92.3 L219.3 99.6" fill="none" stroke="#2c4c1a" stroke-width="0.8" stroke-dasharray="1 1.2" opacity="0.9"/><path d="M213.9 95.6 L211.4 84.8 L216.3 95.6" fill="none" stroke="#2c4c1a" stroke-width="0.8" stroke-dasharray="1 1.2" opacity="0.9"/><path d="M225.9 99.0 L225.7 88.3 L229.2 99.0" fill="none" stroke="#2c4c1a" stroke-width="0.8" stroke-dasharray="1 1.2" opacity="0.9"/><path d="M215.0 100.3 L215.2 89.3 L218.4 100.3" fill="none" stroke="#2c4c1a" stroke-width="0.8" stroke-dasharray="1 1.2" opacity="0.9"/><path d="M263.5 158.6 L264.4 114.4 L266.1 158.6" fill="none" stroke="#2c4c1a" stroke-width="0.8" stroke-dasharray="1 1.2" opacity="0.9"/><path d="M243.0 184.6 L245.2 149.8 L246.8 184.6" fill="none" stroke="#2c4c1a" stroke-width="0.8" stroke-dasharray="1 1.2" opacity="0.9"/><path d="M264.9 186.4 L267.9 154.1 L267.7 186.4" fill="none" stroke="#2c4c1a" stroke-width="0.8" stroke-dasharray="1 1.2" opacity="0.9"/><path d="M271.9 185.1 L268.3 162.4 L274.4 185.1" fill="none" stroke="#2c4c1a" stroke-width="0.8" stroke-dasharray="1 1.2" opacity="0.9"/><path d="M272.9 170.7 L270.9 130.8 L275.9 170.7" fill="none" stroke="#2c4c1a" stroke-width="0.8" stroke-dasharray="1 1.2" opacity="0.9"/><path d="M254.3 167.9 L255.2 129.4 L258.2 167.9" fill="none" stroke="#2c4c1a" stroke-width="0.8" stroke-dasharray="1 1.2" opacity="0.9"/><path d="M263.8 186.7 L268.7 139.4 L267.2 186.7" fill="none" stroke="#2c4c1a" stroke-width="0.8" stroke-dasharray="1 1.2" opacity="0.9"/><path d="M247.2 184.5 L251.3 133.6 L250.4 184.5" fill="none" stroke="#2c4c1a" stroke-width="0.8" stroke-dasharray="1 1.2" opacity="0.9"/><path d="M264.8 163.4 L265.6 116.8 L267.4 163.4" fill="none" stroke="#2c4c1a" stroke-width="0.8" stroke-dasharray="1 1.2" opacity="0.9"/><path d="M244.0 184.3 L239.9 132.6 L247.6 184.3" fill="none" stroke="#2c4c1a" stroke-width="0.8" stroke-dasharray="1 1.2" opacity="0.9"/><path d="M255.1 161.4 L257.8 132.3 L258.9 161.4" fill="none" stroke="#2c4c1a" stroke-width="0.8" stroke-dasharray="1 1.2" opacity="0.9"/><path d="M243.4 176.5 L245.6 155.5 L246.1 176.5" fill="none" stroke="#2c4c1a" stroke-width="0.8" stroke-dasharray="1 1.2" opacity="0.9"/><path d="M270.2 188.4 L275.2 152.4 L272.8 188.4" fill="none" stroke="#2c4c1a" stroke-width="0.8" stroke-dasharray="1 1.2" opacity="0.9"/><path d="M244.5 176.0 L241.4 155.5 L247.3 176.0" fill="none" stroke="#2c4c1a" stroke-width="0.8" stroke-dasharray="1 1.2" opacity="0.9"/><path d="M307.2 136.7 L310.9 121.3 L309.8 136.7" fill="none" stroke="#2c4c1a" stroke-width="0.8" stroke-dasharray="1 1.2" opacity="0.9"/><path d="M320.4 154.5 L320.0 131.1 L323.5 154.5" fill="none" stroke="#2c4c1a" stroke-width="0.8" stroke-dasharray="1 1.2" opacity="0.9"/><path d="M308.5 147.3 L309.7 119.5 L312.3 147.3" fill="none" stroke="#2c4c1a" stroke-width="0.8" stroke-dasharray="1 1.2" opacity="0.9"/><path d="M303.3 143.3 L300.6 111.7 L305.9 143.3" fill="none" stroke="#2c4c1a" stroke-width="0.8" stroke-dasharray="1 1.2" opacity="0.9"/><path d="M321.2 145.5 L316.3 117.9 L324.0 145.5" fill="none" stroke="#2c4c1a" stroke-width="0.8" stroke-dasharray="1 1.2" opacity="0.9"/><path d="M306.0 133.5 L307.4 104.3 L308.2 133.5" fill="none" stroke="#2c4c1a" stroke-width="0.8" stroke-dasharray="1 1.2" opacity="0.9"/><path d="M307.8 144.2 L306.4 113.5 L311.3 144.2" fill="none" stroke="#2c4c1a" stroke-width="0.8" stroke-dasharray="1 1.2" opacity="0.9"/><path d="M312.0 133.5 L313.8 117.7 L316.0 133.5" fill="none" stroke="#2c4c1a" stroke-width="0.8" stroke-dasharray="1 1.2" opacity="0.9"/><path d="M293.5 144.0 L291.7 115.3 L296.3 144.0" fill="none" stroke="#2c4c1a" stroke-width="0.8" stroke-dasharray="1 1.2" opacity="0.9"/><path d="M295.9 141.9 L293.9 113.2 L298.6 141.9" fill="none" stroke="#2c4c1a" stroke-width="0.8" stroke-dasharray="1 1.2" opacity="0.9"/><path d="M313.3 133.6 L315.7 105.6 L316.0 133.6" fill="none" stroke="#2c4c1a" stroke-width="0.8" stroke-dasharray="1 1.2" opacity="0.9"/><path d="M292.5 152.3 L289.3 132.2 L295.3 152.3" fill="none" stroke="#2c4c1a" stroke-width="0.8" stroke-dasharray="1 1.2" opacity="0.9"/><path d="M366.8 186.6 L365.1 158.5 L370.4 186.6" fill="none" stroke="#2c4c1a" stroke-width="0.8" stroke-dasharray="1 1.2" opacity="0.9"/><path d="M349.4 209.6 L347.7 186.1 L352.7 209.6" fill="none" stroke="#2c4c1a" stroke-width="0.8" stroke-dasharray="1 1.2" opacity="0.9"/><path d="M379.3 197.3 L375.5 172.1 L382.3 197.3" fill="none" stroke="#2c4c1a" stroke-width="0.8" stroke-dasharray="1 1.2" opacity="0.9"/><path d="M332.8 208.1 L329.6 164.2 L335.3 208.1" fill="none" stroke="#2c4c1a" stroke-width="0.8" stroke-dasharray="1 1.2" opacity="0.9"/><path d="M374.1 203.1 L372.5 160.2 L376.3 203.1" fill="none" stroke="#2c4c1a" stroke-width="0.8" stroke-dasharray="1 1.2" opacity="0.9"/><path d="M339.6 207.7 L338.0 181.1 L342.4 207.7" fill="none" stroke="#2c4c1a" stroke-width="0.8" stroke-dasharray="1 1.2" opacity="0.9"/><path d="M348.1 196.0 L344.7 149.6 L350.1 196.0" fill="none" stroke="#2c4c1a" stroke-width="0.8" stroke-dasharray="1 1.2" opacity="0.9"/><path d="M383.2 210.3 L382.5 161.9 L387.1 210.3" fill="none" stroke="#2c4c1a" stroke-width="0.8" stroke-dasharray="1 1.2" opacity="0.9"/><path d="M382.1 190.3 L385.5 149.2 L385.5 190.3" fill="none" stroke="#2c4c1a" stroke-width="0.8" stroke-dasharray="1 1.2" opacity="0.9"/><path d="M354.8 192.3 L352.0 163.6 L356.9 192.3" fill="none" stroke="#2c4c1a" stroke-width="0.8" stroke-dasharray="1 1.2" opacity="0.9"/><path d="M359.4 192.3 L354.9 149.2 L363.2 192.3" fill="none" stroke="#2c4c1a" stroke-width="0.8" stroke-dasharray="1 1.2" opacity="0.9"/><path d="M366.5 211.7 L370.5 166.0 L369.6 211.7" fill="none" stroke="#2c4c1a" stroke-width="0.8" stroke-dasharray="1 1.2" opacity="0.9"/><path d="M320.9 206.2 L318.9 182.7 L324.2 206.2" fill="none" stroke="#2c4c1a" stroke-width="0.8" stroke-dasharray="1 1.2" opacity="0.9"/><path d="M355.2 196.1 L356.3 149.2 L357.9 196.1" fill="none" stroke="#2c4c1a" stroke-width="0.8" stroke-dasharray="1 1.2" opacity="0.9"/><path d="M336.9 209.8 L339.7 176.9 L339.6 209.8" fill="none" stroke="#2c4c1a" stroke-width="0.8" stroke-dasharray="1 1.2" opacity="0.9"/><path d="M333.2 199.8 L329.9 156.6 L336.8 199.8" fill="none" stroke="#2c4c1a" stroke-width="0.8" stroke-dasharray="1 1.2" opacity="0.9"/><path d="M257.2 189.5 L252.3 163.9 L260.5 189.5" fill="none" stroke="#2c4c1a" stroke-width="0.8" stroke-dasharray="1 1.2" opacity="0.9"/><path d="M254.4 175.9 L252.1 160.2 L257.5 175.9" fill="none" stroke="#2c4c1a" stroke-width="0.8" stroke-dasharray="1 1.2" opacity="0.9"/><path d="M233.3 183.5 L228.3 158.7 L235.4 183.5" fill="none" stroke="#2c4c1a" stroke-width="0.8" stroke-dasharray="1 1.2" opacity="0.9"/><path d="M219.1 177.2 L223.8 165.2 L222.8 177.2" fill="none" stroke="#2c4c1a" stroke-width="0.8" stroke-dasharray="1 1.2" opacity="0.9"/><path d="M217.1 184.0 L215.3 167.6 L219.8 184.0" fill="none" stroke="#2c4c1a" stroke-width="0.8" stroke-dasharray="1 1.2" opacity="0.9"/><path d="M244.1 185.6 L241.0 168.3 L246.7 185.6" fill="none" stroke="#2c4c1a" stroke-width="0.8" stroke-dasharray="1 1.2" opacity="0.9"/><path d="M218.9 185.0 L217.7 161.3 L221.1 185.0" fill="none" stroke="#2c4c1a" stroke-width="0.8" stroke-dasharray="1 1.2" opacity="0.9"/><path d="M221.6 181.7 L224.4 160.0 L224.3 181.7" fill="none" stroke="#2c4c1a" stroke-width="0.8" stroke-dasharray="1 1.2" opacity="0.9"/><path d="M251.5 186.2 L250.2 167.6 L254.4 186.2" fill="none" stroke="#2c4c1a" stroke-width="0.8" stroke-dasharray="1 1.2" opacity="0.9"/><path d="M246.7 182.6 L246.3 159.3 L249.2 182.6" fill="none" stroke="#2c4c1a" stroke-width="0.8" stroke-dasharray="1 1.2" opacity="0.9"/><path d="M223.9 100.1 Q300 88.1 404.0 125.1" fill="none" stroke="#1c2e12" stroke-width="0.8" stroke-dasharray="1 2"/><path d="M215.7 102.3 Q300 90.3 404.0 127.3" fill="none" stroke="#1c2e12" stroke-width="0.8" stroke-dasharray="1 2"/><path d="M229.4 107.7 Q300 95.7 404.0 132.7" fill="none" stroke="#1c2e12" stroke-width="0.8" stroke-dasharray="1 2"/><path d="M214.2 113.7 Q300 101.7 404.0 138.7" fill="none" stroke="#1c2e12" stroke-width="0.8" stroke-dasharray="1 2"/><path d="M226.7 117.6 Q300 105.6 404.0 142.6" fill="none" stroke="#1c2e12" stroke-width="0.8" stroke-dasharray="1 2"/><path d="M216.9 119.0 Q300 107.0 404.0 144.0" fill="none" stroke="#1c2e12" stroke-width="0.8" stroke-dasharray="1 2"/><path d="M227.4 122.5 Q300 110.5 404.0 147.5" fill="none" stroke="#1c2e12" stroke-width="0.8" stroke-dasharray="1 2"/><path d="M229.6 128.6 Q300 116.6 404.0 153.6" fill="none" stroke="#1c2e12" stroke-width="0.8" stroke-dasharray="1 2"/>
<rect x="192" y="130" width="53" height="10" rx="4" fill="url(#chest)"/>
<rect x="191" y="131" width="8" height="19" rx="2" fill="none" stroke="#f0c050" stroke-width="2" opacity="0.85"/>
<path d="M200 141V156M215 141V156M238 141V156M200 156H245" fill="none" stroke="#a07028" stroke-width="1" opacity="0.8"/>
<path d="M190 145V158" stroke="#3030c0" stroke-width="1.5" opacity="0.7"/>
<path d="M336 157 Q340 140 356 140 Q372 141 375 155 L372 160 Q362 163 358 166 Q350 161 340 161Z" fill="url(#redcap)"/>
<path d="M340 150 Q356 138 372 150M342 155 Q356 146 370 156" stroke="#ff7070" stroke-width="0.8" fill="none" opacity="0.5"/>
</svg>
<!-- SCENE END -->
</body></html>
